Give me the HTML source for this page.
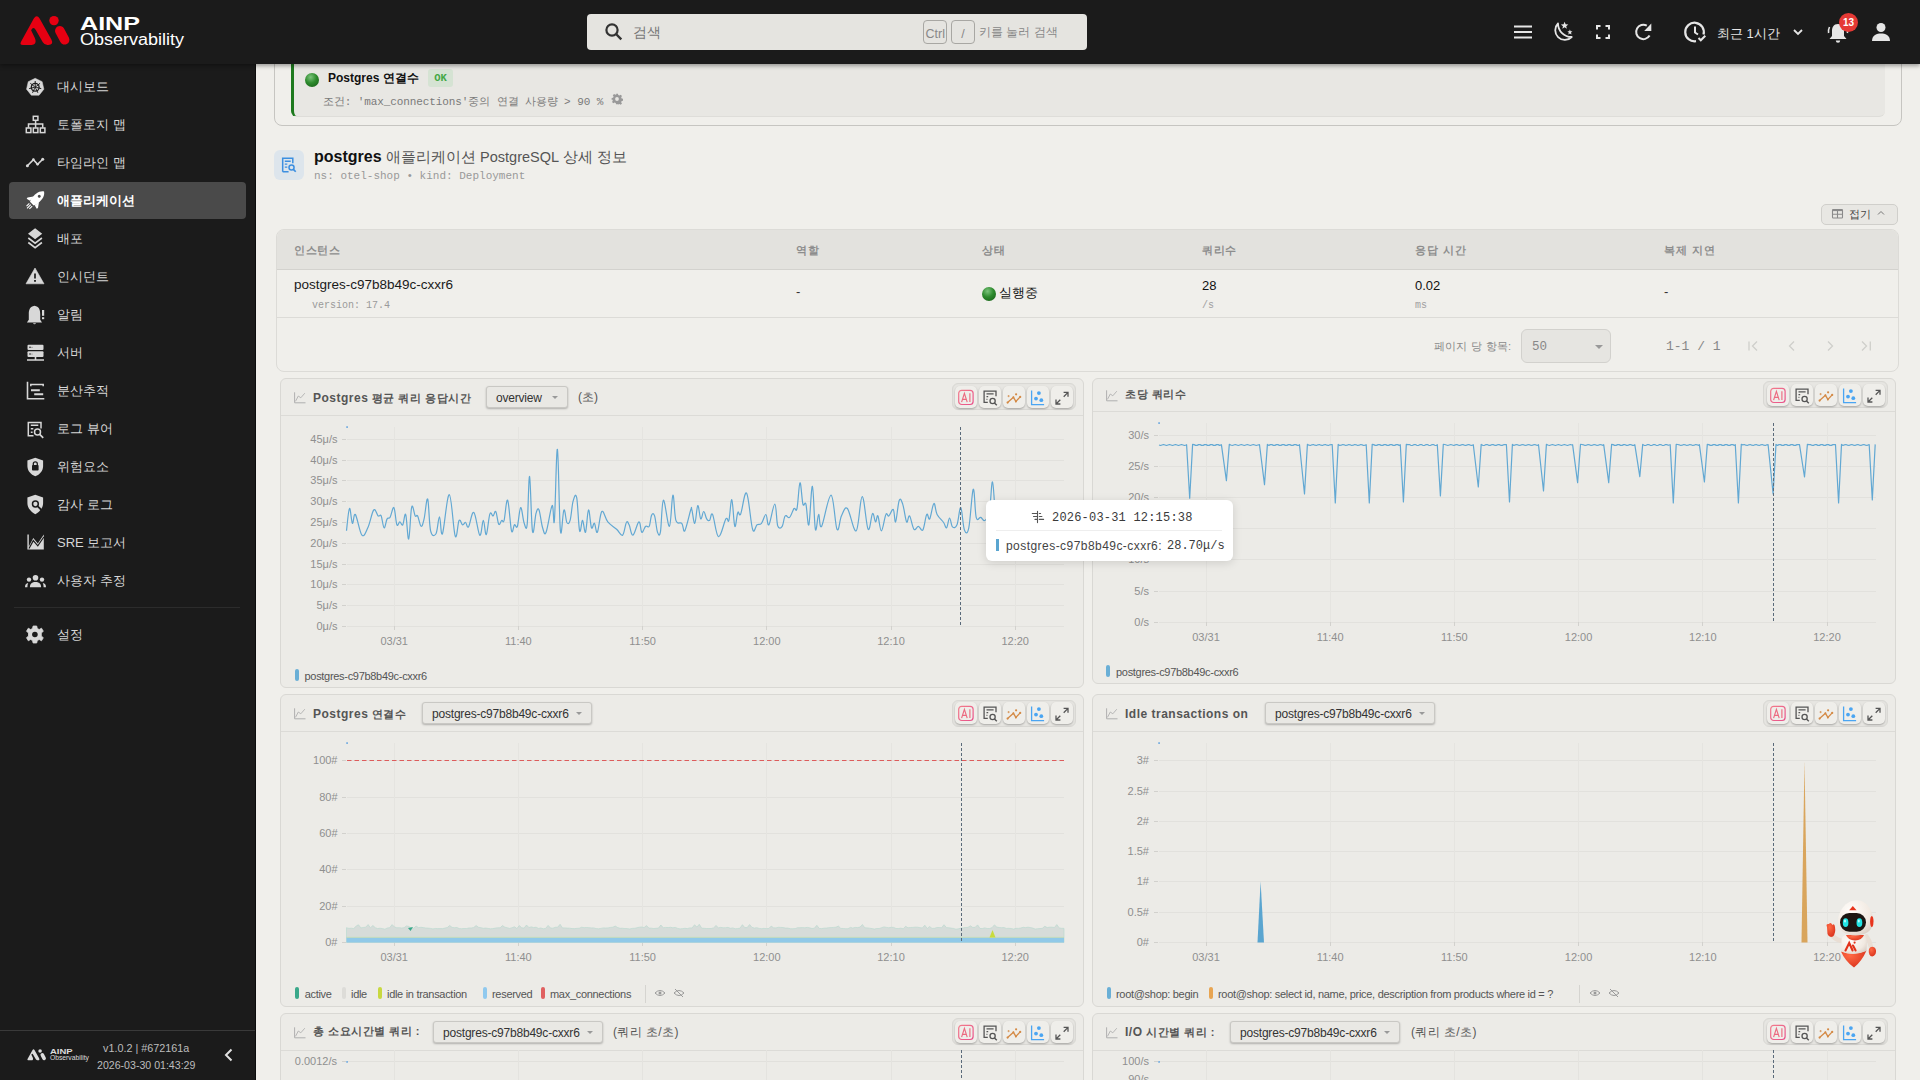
<!DOCTYPE html><html><head><meta charset="utf-8"><style>
*{box-sizing:border-box;margin:0;padding:0}
html,body{width:1920px;height:1080px;overflow:hidden}
body{font-family:"Liberation Sans",sans-serif;background:#f0efeb;position:relative;color:#222}
.abs{position:absolute}
.mono{font-family:"Liberation Mono",monospace}
#hdr{position:absolute;left:0;top:0;width:1920px;height:64px;background:#1b1b1b;z-index:5;box-shadow:0 2px 4px rgba(0,0,0,.35)}
#side{position:absolute;left:0;top:64px;width:256px;height:1016px;background:#1b1b1b;border-right:1px solid #0c0c0c;z-index:4}
.mi{position:absolute;left:9px;width:237px;height:37px;border-radius:4px;color:#d6d6d6;font-size:13px;line-height:37px}
.mi .ic{position:absolute;left:17px;top:9px;width:19px;height:19px}
.mi .tx{position:absolute;left:48px;top:0}
.mi.act{background:#4a4a4a;color:#fff;font-weight:bold}
.panel{position:absolute;background:#ecebe7;border:1px solid #d9d8d4;border-radius:6px;overflow:hidden}
.ph{position:absolute;left:0;top:0;right:0;border-bottom:1px solid #dcdbd7}
.ptitle i{font-style:normal;letter-spacing:.5px;font-size:12px}
.ptitle{position:absolute;font-size:11px;font-weight:bold;color:#555;letter-spacing:.5px;white-space:nowrap}
.sel{position:absolute;height:22px;border:1px solid #c9c8c4;border-radius:3px;background:#e9e8e4;box-shadow:0 1px 2px rgba(0,0,0,.25);font-size:12px;color:#333;line-height:23px;padding-left:9px;white-space:nowrap;letter-spacing:-.2px}
.sel:after{content:"";position:absolute;right:9.5px;top:9px;border-left:3px solid transparent;border-right:3px solid transparent;border-top:3px solid #999}
.tb{position:absolute;width:124.7px;height:27px;border:1px solid #d9d8d4;border-radius:6px;background:#e7e6e2;box-shadow:inset 0 0 1px rgba(0,0,0,.08)}
.btn{position:absolute;width:22px;height:22px;border-radius:5px;background:#efeeea;box-shadow:0 1px 2px rgba(0,0,0,.28)}
.btn svg{position:absolute;left:0;top:0}
.ylab{position:absolute;font-size:11px;line-height:15px;color:#8f8f8f;text-align:right;width:60px;white-space:nowrap}
.xlab{position:absolute;font-size:11px;line-height:15px;color:#8f8f8f;width:60px;text-align:center}
.leg{position:absolute;font-size:11px;line-height:15px;color:#555;white-space:nowrap;letter-spacing:-.3px}
.lb{display:inline-block;width:4px;height:12px;border-radius:1px;vertical-align:-2px;margin-right:5px}
</style></head><body><div id="hdr">
<svg class="abs" style="left:0;top:0" width="80" height="60" viewBox="0 0 80 60">
<path d="M23 45 Q19.3 45 21 41.8 L33.8 18.6 Q36.7 13.8 39.6 18.6 L51.4 39.6 Q54 45 48.2 45 L47.5 45 Q44.5 45 42.8 42.2 L35.9 30.2 Q33.4 25.8 31.1 30.2 L34.6 37.6 Q36.4 41.5 35 43.6 Q34 45 31.5 45 Z" fill="#e60012"/>
<circle cx="54" cy="20.6" r="4.7" fill="#e60012"/>
<path d="M59.8 30.8 L64.6 39.8" stroke="#e60012" stroke-width="9.6" stroke-linecap="round"/>
</svg>
<svg class="abs" style="left:79px;top:13px" width="110" height="40" viewBox="0 0 110 40">
<text x="1" y="16.8" font-family="Liberation Sans" font-weight="bold" font-size="18.5" fill="#fff" textLength="60" lengthAdjust="spacingAndGlyphs">AINP</text>
<text x="1" y="32" font-family="Liberation Sans" font-size="16" fill="#fff" textLength="104" lengthAdjust="spacingAndGlyphs">Observability</text>
</svg>
<div class="abs" style="left:587px;top:14px;width:500px;height:36px;background:#e5e4e0;border-radius:4px"></div>
<svg class="abs" style="left:604px;top:22px" width="20" height="20" viewBox="0 0 20 20"><circle cx="8" cy="8" r="5.6" fill="none" stroke="#333" stroke-width="2.2"/><path d="M12 12l5.3 5.3" stroke="#333" stroke-width="2.4"/></svg>
<div class="abs" style="left:633px;top:24px;font-size:13.5px;color:#777">검색</div>
<div class="abs" style="left:923px;top:20px;width:24px;height:24px;border:1px solid #a8a7a3;border-radius:4px;font-size:12.5px;color:#888;line-height:26px;padding-left:1.5px;overflow:hidden;white-space:nowrap">Ctrl</div>
<div class="abs" style="left:951px;top:20px;width:24px;height:24px;border:1px solid #a8a7a3;border-radius:4px;font-size:12.5px;color:#888;line-height:26px;text-align:center">/</div>
<div class="abs" style="left:979px;top:24px;font-size:12px;color:#888">키를 눌러 검색</div>
<svg class="abs" style="left:1513px;top:24px" width="20" height="16" viewBox="0 0 20 16"><path d="M1 2.5h18M1 8h18M1 13.5h18" stroke="#e6e6e6" stroke-width="2.2"/></svg>
<svg class="abs" style="left:0;top:0" width="1700" height="64" viewBox="0 0 1700 64"><path d="M1558 23.5 A9.6 9.6 0 1 0 1571.7 37 A13.5 13.5 0 0 1 1558 23.5 Z" fill="none" stroke="#e6e6e6" stroke-width="1.8" stroke-linejoin="round"/><path d="M1564.60,21.70 L1565.60,24.22 L1568.31,24.39 L1566.22,26.13 L1566.89,28.76 L1564.60,27.30 L1562.31,28.76 L1562.98,26.13 L1560.89,24.39 L1563.60,24.22Z" fill="#e6e6e6"/><path d="M1569.90,29.50 L1570.61,31.23 L1572.47,31.37 L1571.04,32.57 L1571.49,34.38 L1569.90,33.40 L1568.31,34.38 L1568.76,32.57 L1567.33,31.37 L1569.19,31.23Z" fill="#e6e6e6"/><path d="M1597 29.5 V26 H1600.5 M1605.5 26 H1609 V29.5 M1609 34.5 V38 H1605.5 M1600.5 38 H1597 V34.5" fill="none" stroke="#e6e6e6" stroke-width="2"/><path d="M1649.6 35.5 A7.2 7.2 0 1 1 1646.8 25.6" fill="none" stroke="#e6e6e6" stroke-width="2"/><path d="M1651.3 23.6 L1651.3 30.9 L1644.2 30.9 Z" fill="#e6e6e6"/></svg>
<svg class="abs" style="left:1683px;top:20px" width="26" height="24" viewBox="0 0 26 24"><path d="M20.5 14.5 A9.3 9.3 0 1 0 13 21.2" fill="none" stroke="#e6e6e6" stroke-width="2.2"/><path d="M12 6.5v6l3 2" fill="none" stroke="#e6e6e6" stroke-width="2"/><path d="M15.5 18l2.3 2.3 4.5-4.5" fill="none" stroke="#e6e6e6" stroke-width="2"/></svg>
<div class="abs" style="left:1717px;top:24.5px;font-size:13px;color:#e6e6e6">최근 1시간</div>
<svg class="abs" style="left:1792px;top:27px" width="12" height="10" viewBox="0 0 12 10"><path d="M2 3l4 4 4-4" fill="none" stroke="#e6e6e6" stroke-width="1.8"/></svg>
<svg class="abs" style="left:1826px;top:21px" width="24" height="24" viewBox="0 0 24 24"><path d="M12 3 C7.5 3 6 6.5 6 10 L6 15 L3.5 18 L20.5 18 L18 15 L18 10 C18 6.5 16.5 3 12 3Z" fill="#e6e6e6"/><path d="M9.8 19.5 a2.2 2.2 0 0 0 4.4 0z" fill="#e6e6e6"/><path d="M3.5 6 Q2 9 2.6 12 M20.5 6 Q22 9 21.4 12" fill="none" stroke="#e6e6e6" stroke-width="1.6"/></svg>
<div class="abs" style="left:1839px;top:13px;width:19px;height:19px;border-radius:50%;background:#e53935;color:#fff;font-size:10px;font-weight:bold;line-height:19px;text-align:center">13</div>
<svg class="abs" style="left:1871px;top:22px" width="20" height="20" viewBox="0 0 20 20"><circle cx="10" cy="5.5" r="4.5" fill="#e6e6e6"/><path d="M1 19 C1 13 6 11.5 10 11.5 C14 11.5 19 13 19 19 Z" fill="#e6e6e6"/></svg>
</div>
<div id="side">
<div class="mi" style="top:4px"><div class="tx">대시보드</div></div>
<div class="mi" style="top:42px"><div class="tx">토폴로지 맵</div></div>
<div class="mi" style="top:80px"><div class="tx">타임라인 맵</div></div>
<div class="mi act" style="top:118px"><div class="tx">애플리케이션</div></div>
<div class="mi" style="top:156px"><div class="tx">배포</div></div>
<div class="mi" style="top:194px"><div class="tx">인시던트</div></div>
<div class="mi" style="top:232px"><div class="tx">알림</div></div>
<div class="mi" style="top:270px"><div class="tx">서버</div></div>
<div class="mi" style="top:308px"><div class="tx">분산추적</div></div>
<div class="mi" style="top:346px"><div class="tx">로그 뷰어</div></div>
<div class="mi" style="top:384px"><div class="tx">위험요소</div></div>
<div class="mi" style="top:422px"><div class="tx">감사 로그</div></div>
<div class="mi" style="top:460px"><div class="tx">SRE 보고서</div></div>
<div class="mi" style="top:498px"><div class="tx">사용자 추정</div></div>
<div class="abs" style="left:14px;top:543px;width:226px;height:1px;background:#2c2c2c"></div>
<div class="mi" style="top:552px"><div class="tx">설정</div></div>
<svg class="abs" style="left:0;top:-64px;z-index:2" width="60" height="720" viewBox="0 0 60 720">
<path d="M35.20 78.30 L42.16 81.65 L43.88 89.18 L39.06 95.22 L31.34 95.22 L26.52 89.18 L28.24 81.65 Z" fill="#d8d8d8" stroke="#d8d8d8" stroke-width=".5" stroke-linejoin="round"/>
<circle cx="35.2" cy="87.2" r="3.9" fill="none" stroke="#1b1b1b" stroke-width="1.3"/>
<path d="M35.20 86.00 L35.20 81.00 M36.14 86.45 L40.05 83.33 M36.37 87.47 L41.24 88.58 M35.72 88.28 L37.89 92.79 M34.68 88.28 L32.51 92.79 M34.03 87.47 L29.16 88.58 M34.26 86.45 L30.35 83.33 " stroke="#1b1b1b" stroke-width="1"/>
<circle cx="35.2" cy="87.2" r="1.1" fill="#1b1b1b"/>
<rect x="33.3" y="116.3" width="4.6" height="4" fill="none" stroke="#d8d8d8" stroke-width="1.5"/>
<path d="M35.6 120.3v7.4M28.5 127.7v-3.7h14.2v3.7" fill="none" stroke="#d8d8d8" stroke-width="1.5"/>
<rect x="26.3" y="128" width="4.6" height="4.6" fill="none" stroke="#d8d8d8" stroke-width="1.5"/>
<rect x="33.3" y="128" width="4.6" height="4.6" fill="none" stroke="#d8d8d8" stroke-width="1.5"/>
<rect x="40.3" y="128" width="4.6" height="4.6" fill="none" stroke="#d8d8d8" stroke-width="1.5"/>
<path d="M27.4 165.7 L33.4 159.6 L37.6 164.3 L42.7 159.2" fill="none" stroke="#d8d8d8" stroke-width="1.6"/>
<circle cx="27.4" cy="165.7" r="1.5" fill="#d8d8d8"/><circle cx="33.4" cy="159.6" r="1.3" fill="#d8d8d8"/><circle cx="37.6" cy="164.3" r="1.3" fill="#d8d8d8"/><circle cx="42.7" cy="159.2" r="1.5" fill="#d8d8d8"/>
<g transform="rotate(45 37 198.5)">
<path d="M37 188.5 C41.3 191.5 41.6 197 40.9 203 L39.6 205.8 H34.4 L33.1 203 C32.4 197 32.7 191.5 37 188.5 Z" fill="#fff"/>
<path d="M33.2 199.5 L29.6 204.5 L29.9 206 L33.6 205 Z M40.8 199.5 L44.4 204.5 L44.1 206 L40.4 205 Z" fill="#fff"/>
<circle cx="37" cy="195.3" r="1.5" fill="#4a4a4a"/>
<path d="M35 207.3 V211.3 M37 207.3 V212.5 M39 207.3 V211.3" stroke="#fff" stroke-width="1.1"/>
</g>
<path d="M35.1 228.3 L42.2 233.8 L35.1 239.3 L28 233.8 Z" fill="#d8d8d8"/>
<path d="M28.3 238 L35.1 243.2 L41.9 238 M28.3 242.5 L35.1 247.7 L41.9 242.5" fill="none" stroke="#d8d8d8" stroke-width="1.6"/>
<path d="M35 268 L44 283.8 L26 283.8 Z" fill="#d8d8d8" stroke="#d8d8d8" stroke-width=".6" stroke-linejoin="round"/>
<path d="M35 273.5v5" stroke="#1b1b1b" stroke-width="1.7"/><rect x="34.1" y="280" width="1.8" height="1.8" fill="#1b1b1b"/>
<path d="M34.5 305.8 C30 306.5 28.8 310 28.8 314 L28.8 319.8 L26.9 322.5 L42 322.5 L40.2 319.8 L40.2 314 C40.2 310 39 306.5 34.5 305.8 Z" fill="#d8d8d8"/>
<path d="M33 323.3 a1.6 1.6 0 0 0 3 0 z" fill="#d8d8d8"/>
<rect x="42" y="310" width="2.2" height="5.8" fill="#d8d8d8"/><rect x="42" y="317.2" width="2.2" height="2" fill="#d8d8d8"/>
<rect x="27.5" y="344.8" width="16" height="5.3" rx="1" fill="#d8d8d8"/>
<rect x="27.5" y="351.3" width="16" height="5.6" rx="1" fill="#d8d8d8"/>
<path d="M35.5 357v2.5M27 360h17" stroke="#d8d8d8" stroke-width="1.6"/>
<circle cx="30" cy="347.3" r=".8" fill="#1b1b1b"/><circle cx="30" cy="354" r=".8" fill="#1b1b1b"/><circle cx="32" cy="347.3" r=".6" fill="#777"/><circle cx="32" cy="354" r=".6" fill="#777"/>
<path d="M27.5 381.7 V398.8 H44.3" fill="none" stroke="#d8d8d8" stroke-width="1.6"/>
<path d="M30.8 386.3 V384.5 H43.2 V386.3" fill="none" stroke="#d8d8d8" stroke-width="1.5"/>
<path d="M31 390.2 H39.8 M34.2 394.2 H43.2" stroke="#d8d8d8" stroke-width="2"/>
<path d="M41 428.5 V422.5 H28.3 V435.8 H33.5" fill="none" stroke="#d8d8d8" stroke-width="1.5"/>
<path d="M30.8 425.3h7.5M30.8 428.8h2.5M30.8 432.2h1.8" stroke="#d8d8d8" stroke-width="1.4"/>
<circle cx="37.5" cy="432" r="3" fill="none" stroke="#d8d8d8" stroke-width="1.5"/>
<path d="M39.7 434.3 L43.2 437.8" stroke="#d8d8d8" stroke-width="1.7"/>
<path d="M35.3 457.7 L43.1 460.6 V466 C43.1 471 39.8 474.6 35.3 476.2 C30.8 474.6 27.4 471 27.4 466 V460.6 Z" fill="#d8d8d8"/>
<rect x="32" y="465" width="6.6" height="5.6" rx=".8" fill="#1b1b1b"/>
<path d="M33.3 465.2 V463.8 a2 2 0 0 1 4 0 V465.2" fill="none" stroke="#1b1b1b" stroke-width="1.3"/>
<path d="M35.3 494.7 L43.1 497.6 V503 C43.1 508 39.8 511.8 35.3 514.2 C30.8 511.8 27.4 508 27.4 503 V497.6 Z" fill="#d8d8d8"/>
<circle cx="35.4" cy="504" r="2.9" fill="none" stroke="#1b1b1b" stroke-width="1.5"/>
<path d="M37.5 506.2 L41.5 510" stroke="#1b1b1b" stroke-width="1.8"/>
<path d="M27.4 549.5 V534.5 H28.8 V546.5 L33.3 538 L37.8 543.5 L43.8 534.5 V549.5 Z" fill="#d8d8d8"/>
<path d="M29 548.5 L33.3 540.6 L37.8 545.8 L43.8 537" fill="none" stroke="#1b1b1b" stroke-width="1.2"/>
<circle cx="35.5" cy="577.8" r="2.8" fill="#d8d8d8"/>
<circle cx="29" cy="579.6" r="2.2" fill="#d8d8d8"/><circle cx="42" cy="579.6" r="2.2" fill="#d8d8d8"/>
<path d="M29.9 587.2 C29.9 583.6 32.2 582 35.5 582 C38.8 582 41.1 583.6 41.1 587.2 Z" fill="#d8d8d8"/>
<path d="M25 587.2 C25 584.8 26 583.4 28.2 583 C27.6 584.2 27.4 585.6 27.4 587.2 Z" fill="#d8d8d8"/>
<path d="M46 587.2 C46 584.8 45 583.4 42.8 583 C43.4 584.2 43.6 585.6 43.6 587.2 Z" fill="#d8d8d8"/>
<g transform="translate(34.9 634.5)">
<path d="M-1.8 -8.5 H1.8 L2.4 -6 L4.3 -5 L6.6 -6.3 L8.4 -3.2 L6.4 -1.6 V1.6 L8.4 3.2 L6.6 6.3 L4.3 5 L2.4 6 L1.8 8.5 H-1.8 L-2.4 6 L-4.3 5 L-6.6 6.3 L-8.4 3.2 L-6.4 1.6 V-1.6 L-8.4 -3.2 L-6.6 -6.3 L-4.3 -5 L-2.4 -6 Z" fill="#d8d8d8" stroke="#d8d8d8" stroke-width=".8" stroke-linejoin="round"/>
<circle r="2.8" fill="#1b1b1b"/></g>
</svg>
<div class="abs" style="left:0;top:966px;width:255px;height:1px;background:#3a3a3a"></div>
<svg class="abs" style="left:0;top:-64px" width="100" height="1080" viewBox="0 0 100 1080">
<g transform="translate(19.57 1043.16) scale(0.38)">
<path d="M23 45 Q19.3 45 21 41.8 L33.8 18.6 Q36.7 13.8 39.6 18.6 L51.4 39.6 Q54 45 48.2 45 L47.5 45 Q44.5 45 42.8 42.2 L35.9 30.2 Q33.4 25.8 31.1 30.2 L34.6 37.6 Q36.4 41.5 35 43.6 Q34 45 31.5 45 Z" fill="#dcdcdc"/>
<circle cx="54" cy="20.6" r="4.7" fill="#dcdcdc"/>
<path d="M59.8 30.8 L64.6 39.8" stroke="#dcdcdc" stroke-width="9.6" stroke-linecap="round"/>
</g>
<text x="50" y="1054" font-family="Liberation Sans" font-weight="bold" font-size="7.2" fill="#dcdcdc" textLength="22.7" lengthAdjust="spacingAndGlyphs">AINP</text>
<text x="50" y="1060.3" font-family="Liberation Sans" font-size="6.6" fill="#dcdcdc" textLength="39" lengthAdjust="spacingAndGlyphs">Observability</text></svg>
<div class="abs" style="left:103px;top:977.5px;font-size:10.8px;color:#bdbdbd;white-space:nowrap">v1.0.2 | #672161a</div>
<div class="abs" style="left:97px;top:994.5px;font-size:10.6px;color:#bdbdbd;white-space:nowrap">2026-03-30 01:43:29</div>
<svg class="abs" style="left:222px;top:984px" width="14" height="14" viewBox="0 0 14 14"><path d="M9.5 1.5L4 7l5.5 5.5" fill="none" stroke="#e0e0e0" stroke-width="2"/></svg>
</div>
<div class="abs" style="left:274px;top:40px;width:1628px;height:86px;border:1px solid #c6c5c1;border-radius:8px;background:#f0efeb"></div>
<div class="abs" style="left:291px;top:40px;width:1594px;height:77px;background:#e8e7e3;border-left:3px solid #1e7a1e;border-bottom:1px solid #deddd9;border-radius:0 0 6px 6px"></div>
<div class="abs" style="left:305px;top:73px;width:14px;height:14px;border-radius:50%;background:radial-gradient(circle at 40% 30%,#7cc47c 0,#2e8b2e 45%,#145a14 100%)"></div>
<div class="abs" style="left:328px;top:69.5px;font-size:12px;font-weight:bold;color:#111;white-space:nowrap">Postgres 연결수</div>
<div class="abs mono" style="left:428px;top:69px;width:25px;height:17.5px;background:#d5e3d3;border-radius:3px;color:#43a843;font-size:10.5px;font-weight:bold;line-height:19px;text-align:center">OK</div>
<div class="abs mono" style="left:323px;top:93.5px;font-size:11px;color:#7a7a7a;white-space:nowrap;letter-spacing:-.1px">조건: 'max_connections'중의 연결 사용량 &gt; 90 %</div>
<svg class="abs" style="left:611px;top:93px" width="12" height="12" viewBox="0 0 19 19"><path d="M8 1h3l.5 2.3 1.8.8 2-1.3 2.1 2.1-1.3 2 .8 1.8 2.3.5v3l-2.3.5-.8 1.8 1.3 2-2.1 2.1-2-1.3-1.8.8L11 18H8l-.5-2.3-1.8-.8-2 1.3-2.1-2.1 1.3-2-.8-1.8L1 11V8l2.3-.5.8-1.8-1.3-2 2.1-2.1 2 1.3 1.8-.8Z" fill="#999"/><circle cx="9.5" cy="9.5" r="3" fill="#e7e6e2"/></svg>
<div class="abs" style="left:274px;top:150px;width:30px;height:30px;border-radius:6px;background:#dde5ec"></div>
<svg class="abs" style="left:281px;top:157px" width="16" height="16" viewBox="0 0 19 19"><path d="M2 17.5V1.5h12V7.5M2 17.5h7" fill="none" stroke="#3d8fe0" stroke-width="1.8"/><path d="M4.5 5h7M4.5 8.5h3M4.5 12h3" stroke="#3d8fe0" stroke-width="1.6"/><circle cx="12.5" cy="12.5" r="3" fill="none" stroke="#3d8fe0" stroke-width="1.8"/><path d="M14.7 14.7L17.5 17.5" stroke="#3d8fe0" stroke-width="2"/></svg>
<div class="abs" style="left:314px;top:148px;font-size:16px;white-space:nowrap;color:#555"><b style="color:#111">postgres</b> <span style="font-size:14.5px">애플리케이션 PostgreSQL 상세 정보</span></div>
<div class="abs mono" style="left:314px;top:170px;font-size:11px;color:#999;white-space:nowrap">ns: otel-shop • kind: Deployment</div>
<div class="abs" style="left:1821px;top:203.5px;width:76.5px;height:21.2px;border:1px solid #d0cfcb;border-radius:5px;background:#e8e7e3"></div>
<svg class="abs" style="left:1831px;top:208px" width="13" height="12" viewBox="0 0 13 12"><rect x="1.5" y="1.6" width="10" height="8.4" rx=".8" fill="none" stroke="#8a8a8a" stroke-width="1.1"/><path d="M1.5 2.3h10" stroke="#8a8a8a" stroke-width="1.6"/><path d="M1.5 6.3h10M6.5 2v8" stroke="#8a8a8a" stroke-width="1.1"/></svg>
<div class="abs" style="left:1849px;top:207px;font-size:11px;color:#444">접기</div>
<svg class="abs" style="left:1877px;top:210px" width="8" height="6" viewBox="0 0 8 6"><path d="M1 4.5L4 1.5 7 4.5" fill="none" stroke="#777" stroke-width="1"/></svg>
<div class="abs" style="left:276px;top:229px;width:1623px;height:143px;border:1px solid #dcdbd7;border-radius:8px;background:#f0efeb;overflow:hidden">
<div class="abs" style="left:0;top:0;width:100%;height:40px;background:#e3e2de;border-bottom:1px solid #d3d2ce"></div>
<div class="abs" style="left:0;top:88px;width:100%;height:1px;background:#dedddа"></div>
</div>
<div class="abs" style="left:277px;top:317px;width:1621px;height:1px;background:#dcdbd7"></div>
<div class="abs" style="left:294px;top:243.5px;font-size:10.5px;font-weight:bold;color:#8d8d8d;letter-spacing:.5px;word-spacing:2px;white-space:nowrap">인스턴스</div>
<div class="abs" style="left:796px;top:243.5px;font-size:10.5px;font-weight:bold;color:#8d8d8d;letter-spacing:.5px;word-spacing:2px;white-space:nowrap">역할</div>
<div class="abs" style="left:982px;top:243.5px;font-size:10.5px;font-weight:bold;color:#8d8d8d;letter-spacing:.5px;word-spacing:2px;white-space:nowrap">상태</div>
<div class="abs" style="left:1202px;top:243.5px;font-size:10.5px;font-weight:bold;color:#8d8d8d;letter-spacing:.5px;word-spacing:2px;white-space:nowrap">쿼리수</div>
<div class="abs" style="left:1415px;top:243.5px;font-size:10.5px;font-weight:bold;color:#8d8d8d;letter-spacing:.5px;word-spacing:2px;white-space:nowrap">응답 시간</div>
<div class="abs" style="left:1664px;top:243.5px;font-size:10.5px;font-weight:bold;color:#8d8d8d;letter-spacing:.5px;word-spacing:2px;white-space:nowrap">복제 지연</div>
<div class="abs" style="left:294px;top:277px;font-size:13.5px;color:#1a1a1a;white-space:nowrap">postgres-c97b8b49c-cxxr6</div>
<div class="abs mono" style="left:312px;top:299.5px;font-size:10px;color:#9a9a9a;white-space:nowrap">version: 17.4</div>
<div class="abs" style="left:796px;top:284px;font-size:13px;color:#333">-</div>
<div class="abs" style="left:982px;top:287px;width:14px;height:14px;border-radius:50%;background:radial-gradient(circle at 40% 30%,#7cc47c 0,#2e8b2e 45%,#145a14 100%)"></div>
<div class="abs" style="left:999px;top:284px;font-size:13px;color:#111">실행중</div>
<div class="abs" style="left:1202px;top:277.5px;font-size:13px;color:#111">28</div>
<div class="abs mono" style="left:1202px;top:300px;font-size:10px;color:#a0a0a0">/s</div>
<div class="abs" style="left:1415px;top:277.5px;font-size:13px;color:#111">0.02</div>
<div class="abs mono" style="left:1415px;top:300px;font-size:10px;color:#a0a0a0">ms</div>
<div class="abs" style="left:1664px;top:284px;font-size:13px;color:#333">-</div>
<div class="abs" style="left:1434px;top:339px;font-size:11px;color:#8a8a8a;letter-spacing:0px;word-spacing:1px;white-space:nowrap">페이지 당 항목:</div>
<div class="abs" style="left:1521px;top:329px;width:90px;height:34px;border:1px solid #d2d1cd;border-radius:6px;background:#e6e5e1"></div>
<div class="abs mono" style="left:1532px;top:339.5px;font-size:12.5px;color:#888">50</div>
<div class="abs" style="left:1595px;top:345px;border-left:4px solid transparent;border-right:4px solid transparent;border-top:4px solid #999"></div>
<div class="abs mono" style="left:1666px;top:338.5px;font-size:13px;color:#888;white-space:nowrap">1-1 / 1</div>
<svg class="abs" style="left:1746px;top:339px" width="130" height="14" viewBox="0 0 130 14"><path d="M3 2.5v9M11 2.5L6.5 7l4.5 4.5" fill="none" stroke="#cfcfcb" stroke-width="1.3"/><path d="M48 2.5L43.5 7l4.5 4.5" fill="none" stroke="#cfcfcb" stroke-width="1.3"/><path d="M82 2.5l4.5 4.5-4.5 4.5" fill="none" stroke="#cfcfcb" stroke-width="1.3"/><path d="M116 2.5l4.5 4.5-4.5 4.5M124.3 2.5v9" fill="none" stroke="#cfcfcb" stroke-width="1.3"/></svg>
<div class="panel" style="left:280px;top:378px;width:804px;height:310px"><div class="ph" style="height:37px"></div></div>
<div class="abs" style="left:294px;top:389.5px"><svg width="12" height="12" viewBox="0 0 12 12"><path d="M.6 .3V10.8H11.5" fill="none" stroke="#b0b0b0" stroke-width="1"/><path d="M1.5 9.3L4.3 4 6.8 5.8 10.8 1.2" fill="none" stroke="#b0b0b0" stroke-width=".9"/></svg></div>
<div class="ptitle" style="left:313px;top:390.5px"><i>Postgres</i> 평균 쿼리 응답시간</div>
<div class="sel" style="left:486px;top:386px;width:82px">overview</div>
<div class="abs" style="left:578px;top:389px;font-size:12px;color:#555">(초)</div>
<div class="tb" style="left:951.6px;top:383.1px"></div><div class="btn" style="left:955.0px;top:385.9px"><svg width="22" height="22" viewBox="0 0 22 22"><defs><linearGradient id="aig" x1="0" y1="0" x2="1" y2="1"><stop offset="0" stop-color="#f27c8c"/><stop offset="1" stop-color="#e8508a"/></linearGradient></defs><rect x="3.7" y="4.3" width="14.4" height="14.2" rx="3" fill="none" stroke="url(#aig)" stroke-width="1.2"/><path d="M6.6 16.1 L9.4 7.3 L12.2 16.1 M7.5 13.3 H11.3 M14.9 7.3 V16.1" fill="none" stroke="#ec6a80" stroke-width="1.15"/></svg></div><div class="btn" style="left:979.0px;top:385.9px"><svg width="22" height="22" viewBox="0 0 22 22"><path d="M8.8 16.4 H5.1 V5.1 H17 V10.3" fill="none" stroke="#555" stroke-width="1.3"/><path d="M7.5 7.8 H14.6 M7.5 10.6 H9.2 M7.5 13.3 H8.4" stroke="#555" stroke-width="1.2"/><circle cx="13.6" cy="15" r="2.6" fill="none" stroke="#555" stroke-width="1.3"/><path d="M15.5 16.9 L17.8 19.2" stroke="#555" stroke-width="1.4"/></svg></div><div class="btn" style="left:1003.0px;top:385.9px"><svg width="22" height="22" viewBox="0 0 22 22"><path d="M4.6 16.6 L10.4 11.3 L12.9 15.4 L17.2 10.9" fill="none" stroke="#d48a46" stroke-width="1.3"/><circle cx="4.6" cy="16.6" r="1.1" fill="#d48a46"/><circle cx="10.4" cy="11.3" r="1" fill="#d48a46"/><circle cx="12.9" cy="15.4" r="1" fill="#d48a46"/><circle cx="17.2" cy="10.9" r="1.1" fill="#d48a46"/><path d="M5.6 9 V11.2 M4.5 10.1 H6.7" stroke="#d48a46" stroke-width=".7"/><circle cx="13.1" cy="8.3" r="1.1" fill="#d48a46"/></svg></div><div class="btn" style="left:1027.0px;top:385.9px"><svg width="22" height="22" viewBox="0 0 22 22"><path d="M4.6 4.6 V18.7 H17.1" fill="none" stroke="#4aa5f2" stroke-width="1.3"/><circle cx="11.9" cy="7.1" r="1.9" fill="#4aa5f2"/><circle cx="9" cy="12.6" r="1.9" fill="#4aa5f2"/><circle cx="14.3" cy="14.2" r="1.9" fill="#4aa5f2"/></svg></div><div class="btn" style="left:1051.0px;top:385.9px"><svg width="22" height="22" viewBox="0 0 22 22"><path d="M12.6 6.4 H17 V10.8 M17 6.4 L12.7 10.7 M5 13.6 V18 H9.4 M5 18 L9.3 13.7" fill="none" stroke="#555" stroke-width="1.3"/></svg></div>
<div class="ylab" style="left:277.5px;top:618.9px">0μ/s</div>
<div class="ylab" style="left:277.5px;top:598.1px">5μ/s</div>
<div class="ylab" style="left:277.5px;top:577.3px">10μ/s</div>
<div class="ylab" style="left:277.5px;top:556.5px">15μ/s</div>
<div class="ylab" style="left:277.5px;top:535.7px">20μ/s</div>
<div class="ylab" style="left:277.5px;top:514.9px">25μ/s</div>
<div class="ylab" style="left:277.5px;top:494.1px">30μ/s</div>
<div class="ylab" style="left:277.5px;top:473.3px">35μ/s</div>
<div class="ylab" style="left:277.5px;top:452.5px">40μ/s</div>
<div class="ylab" style="left:277.5px;top:431.7px">45μ/s</div>
<div class="xlab" style="left:364.2px;top:633.5px">03/31</div>
<div class="xlab" style="left:488.4px;top:633.5px">11:40</div>
<div class="xlab" style="left:612.6px;top:633.5px">11:50</div>
<div class="xlab" style="left:736.8px;top:633.5px">12:00</div>
<div class="xlab" style="left:861.0px;top:633.5px">12:10</div>
<div class="xlab" style="left:985.2px;top:633.5px">12:20</div>
<svg class="abs" style="left:0;top:0;overflow:visible" width="1920" height="1080"><line x1="347" y1="626.5" x2="1064" y2="626.5" stroke="#e2e1dd" stroke-width="1"/><line x1="342" y1="626.5" x2="346" y2="626.5" stroke="#d2d1cd" stroke-width="1"/><line x1="347" y1="605.5" x2="1064" y2="605.5" stroke="#e2e1dd" stroke-width="1"/><line x1="342" y1="605.5" x2="346" y2="605.5" stroke="#d2d1cd" stroke-width="1"/><line x1="347" y1="584.5" x2="1064" y2="584.5" stroke="#e2e1dd" stroke-width="1"/><line x1="342" y1="584.5" x2="346" y2="584.5" stroke="#d2d1cd" stroke-width="1"/><line x1="347" y1="564.5" x2="1064" y2="564.5" stroke="#e2e1dd" stroke-width="1"/><line x1="342" y1="564.5" x2="346" y2="564.5" stroke="#d2d1cd" stroke-width="1"/><line x1="347" y1="543.5" x2="1064" y2="543.5" stroke="#e2e1dd" stroke-width="1"/><line x1="342" y1="543.5" x2="346" y2="543.5" stroke="#d2d1cd" stroke-width="1"/><line x1="347" y1="522.5" x2="1064" y2="522.5" stroke="#e2e1dd" stroke-width="1"/><line x1="342" y1="522.5" x2="346" y2="522.5" stroke="#d2d1cd" stroke-width="1"/><line x1="347" y1="501.5" x2="1064" y2="501.5" stroke="#e2e1dd" stroke-width="1"/><line x1="342" y1="501.5" x2="346" y2="501.5" stroke="#d2d1cd" stroke-width="1"/><line x1="347" y1="480.5" x2="1064" y2="480.5" stroke="#e2e1dd" stroke-width="1"/><line x1="342" y1="480.5" x2="346" y2="480.5" stroke="#d2d1cd" stroke-width="1"/><line x1="347" y1="460.5" x2="1064" y2="460.5" stroke="#e2e1dd" stroke-width="1"/><line x1="342" y1="460.5" x2="346" y2="460.5" stroke="#d2d1cd" stroke-width="1"/><line x1="347" y1="439.5" x2="1064" y2="439.5" stroke="#e2e1dd" stroke-width="1"/><line x1="342" y1="439.5" x2="346" y2="439.5" stroke="#d2d1cd" stroke-width="1"/><line x1="394.5" y1="427" x2="394.5" y2="626" stroke="#e5e4e0" stroke-width="1"/><line x1="394.5" y1="626" x2="394.5" y2="630" stroke="#d2d1cd" stroke-width="1"/><line x1="518.5" y1="427" x2="518.5" y2="626" stroke="#e5e4e0" stroke-width="1"/><line x1="518.5" y1="626" x2="518.5" y2="630" stroke="#d2d1cd" stroke-width="1"/><line x1="642.5" y1="427" x2="642.5" y2="626" stroke="#e5e4e0" stroke-width="1"/><line x1="642.5" y1="626" x2="642.5" y2="630" stroke="#d2d1cd" stroke-width="1"/><line x1="766.5" y1="427" x2="766.5" y2="626" stroke="#e5e4e0" stroke-width="1"/><line x1="766.5" y1="626" x2="766.5" y2="630" stroke="#d2d1cd" stroke-width="1"/><line x1="891.5" y1="427" x2="891.5" y2="626" stroke="#e5e4e0" stroke-width="1"/><line x1="891.5" y1="626" x2="891.5" y2="630" stroke="#d2d1cd" stroke-width="1"/><line x1="1015.5" y1="427" x2="1015.5" y2="626" stroke="#e5e4e0" stroke-width="1"/><line x1="1015.5" y1="626" x2="1015.5" y2="630" stroke="#d2d1cd" stroke-width="1"/><path d="M346.5,530.8 C347.0,526.8 348.4,509.9 349.5,508.5 C350.5,507.2 351.4,522.3 352.4,523.3 C353.5,524.4 353.7,512.3 355.4,514.5 C357.1,516.6 359.7,532.8 361.9,535.2 C364.1,537.6 365.7,532.3 367.8,527.8 C370.0,523.3 371.9,512.2 373.7,510.0 C375.6,507.9 376.9,514.9 378.2,515.9 C379.5,517.0 380.1,513.8 381.2,515.9 C382.2,518.1 383.0,527.3 384.1,527.8 C385.2,528.3 386.0,520.8 387.1,518.9 C388.1,517.0 388.8,519.4 390.0,517.4 C391.3,515.4 392.7,506.3 393.9,507.6 C395.1,509.0 395.8,522.3 396.9,524.8 C397.9,527.4 398.7,521.9 399.8,521.9 C400.9,521.9 401.7,526.2 402.8,524.8 C403.8,523.5 404.7,511.9 405.7,514.5 C406.8,517.0 407.6,540.4 408.7,539.0 C409.8,537.7 410.5,511.2 411.7,507.1 C412.8,502.9 414.2,514.3 415.2,515.9 C416.3,517.5 416.5,514.1 417.6,515.9 C418.7,517.8 420.0,525.8 421.1,526.3 C422.3,526.8 422.9,523.8 424.1,518.9 C425.3,514.0 426.5,496.9 427.7,499.1 C428.8,501.2 429.1,524.5 430.6,530.8 C432.1,537.0 434.4,536.2 436.0,533.7 C437.6,531.2 438.3,516.8 439.5,516.8 C440.7,516.8 440.7,537.7 442.5,533.7 C444.2,529.7 447.0,494.2 449.3,494.6 C451.6,495.0 453.4,531.4 455.2,536.1 C457.0,540.7 457.7,522.4 459.1,520.4 C460.4,518.4 461.4,524.5 462.6,524.8 C463.8,525.2 464.5,522.1 465.6,522.5 C466.6,522.8 467.0,528.7 468.5,526.9 C470.0,525.1 471.8,510.9 473.9,512.4 C475.9,513.9 478.1,533.8 479.8,535.2 C481.5,536.6 482.2,520.5 483.3,520.4 C484.5,520.3 485.1,535.8 486.3,534.6 C487.5,533.4 488.6,517.2 489.9,513.9 C491.1,510.5 492.1,516.4 493.1,515.9 C494.2,515.5 494.8,510.0 495.8,511.5 C496.8,513.0 497.7,522.6 498.7,524.2 C499.8,525.8 500.8,521.1 501.7,520.4 C502.7,519.7 503.0,524.0 504.1,520.4 C505.1,516.8 506.3,498.4 507.6,500.2 C509.0,502.1 510.3,526.3 511.5,530.8 C512.7,535.2 513.4,525.6 514.4,524.8 C515.5,524.0 516.3,529.4 517.4,526.3 C518.5,523.2 519.4,508.2 520.7,507.6 C521.9,507.1 523.0,520.4 524.2,523.3 C525.4,526.3 526.2,532.7 527.2,524.2 C528.1,515.8 528.6,475.3 529.6,476.5 C530.5,477.8 531.3,524.8 532.5,531.3 C533.7,537.9 534.9,516.8 536.1,513.0 C537.2,509.1 537.9,507.4 539.0,510.0 C540.2,512.7 541.3,523.8 542.6,527.8 C543.9,531.8 544.4,536.2 546.1,532.2 C547.8,528.2 550.6,507.7 552.1,505.6 C553.6,503.4 553.5,530.5 554.4,520.4 C555.4,510.3 556.3,447.4 557.4,449.3 C558.5,451.2 559.2,519.8 560.4,530.8 C561.5,541.7 562.7,511.5 563.9,510.0 C565.1,508.5 565.8,520.6 566.9,522.5 C568.0,524.3 569.0,524.2 570.1,520.4 C571.3,516.5 571.9,505.2 573.1,501.1 C574.3,497.0 575.5,492.2 576.7,497.6 C577.8,502.9 578.5,526.6 579.6,530.8 C580.7,534.9 581.5,520.1 582.6,520.4 C583.6,520.7 584.5,534.1 585.5,532.2 C586.6,530.4 587.4,510.8 588.5,510.0 C589.6,509.2 590.4,525.4 591.5,527.8 C592.5,530.2 593.4,522.5 594.4,523.3 C595.5,524.1 596.1,534.4 597.4,532.2 C598.7,530.1 600.0,513.4 601.8,511.5 C603.7,509.6 605.1,518.7 607.8,521.9 C610.4,525.1 614.0,526.9 616.6,529.3 C619.3,531.7 620.8,536.4 622.6,535.2 C624.3,534.0 625.2,524.3 626.4,522.5 C627.6,520.6 627.9,522.5 629.1,524.8 C630.3,527.1 631.2,535.7 632.9,535.2 C634.7,534.7 637.3,522.4 638.9,521.9 C640.5,521.3 640.6,531.4 641.8,532.2 C643.0,533.0 644.3,527.4 645.7,526.3 C647.0,525.2 648.2,528.3 649.2,526.3 C650.3,524.3 650.6,516.9 651.6,515.1 C652.6,513.2 653.5,512.8 654.6,515.9 C655.6,519.0 656.5,529.4 657.5,532.2 C658.6,535.1 659.4,537.4 660.5,531.6 C661.5,525.9 661.8,501.2 663.4,500.2 C665.0,499.3 667.7,527.2 669.4,526.3 C671.1,525.4 671.7,496.3 672.9,495.2 C674.1,494.1 674.3,515.3 675.9,520.4 C677.5,525.5 680.2,521.5 681.8,523.3 C683.4,525.2 683.2,533.2 684.8,530.8 C686.4,528.4 689.4,513.9 690.7,510.0 C692.0,506.2 691.1,507.0 691.8,509.4 C692.6,511.8 693.7,524.0 694.8,523.3 C695.9,522.7 696.7,506.4 697.8,505.6 C698.8,504.8 699.7,517.8 700.7,518.9 C701.8,520.0 702.6,511.5 703.7,511.5 C704.8,511.5 705.6,517.3 706.7,518.9 C707.7,520.5 708.6,521.2 709.6,520.4 C710.7,519.6 711.0,511.5 712.6,514.5 C714.2,517.4 716.1,535.9 718.5,536.7 C720.9,537.5 724.0,521.8 725.9,518.9 C727.8,516.0 727.8,523.9 728.9,520.4 C729.9,516.9 730.8,498.6 731.8,499.7 C732.9,500.7 733.7,524.0 734.8,526.3 C735.9,528.6 736.7,514.6 737.8,512.4 C738.8,510.1 739.1,517.3 740.7,513.9 C742.3,510.4 744.5,490.4 746.6,493.1 C748.8,495.9 750.7,523.6 752.6,529.3 C754.4,535.0 755.4,525.9 757.0,524.8 C758.6,523.8 759.9,525.2 761.5,523.3 C763.1,521.5 764.6,514.2 765.9,514.5 C767.2,514.7 767.3,526.7 768.9,524.8 C770.5,523.0 773.2,503.9 774.8,504.1 C776.4,504.3 776.4,521.7 777.7,525.7 C779.1,529.7 780.9,528.1 782.2,526.3 C783.5,524.5 783.8,517.5 785.2,515.9 C786.5,514.3 788.0,518.8 789.6,517.4 C791.2,516.1 792.7,510.1 794.0,508.5 C795.4,506.9 795.9,513.2 797.0,508.5 C798.1,503.9 798.9,483.6 800.0,482.8 C801.0,482.0 801.9,500.3 802.9,504.1 C804.0,507.9 804.8,500.4 805.9,504.1 C807.0,507.8 807.7,528.0 808.9,524.8 C810.0,521.6 811.2,485.5 812.4,486.3 C813.6,487.1 814.2,524.2 815.4,529.3 C816.5,534.3 817.5,515.0 818.6,514.5 C819.7,513.9 819.3,529.8 821.6,526.3 C823.8,522.8 828.3,494.7 831.1,495.2 C833.8,495.7 835.1,525.5 837.0,529.3 C838.9,533.0 839.6,519.7 841.4,515.9 C843.3,512.2 844.7,505.9 847.4,508.5 C850.0,511.2 853.6,532.9 856.2,530.8 C858.9,528.6 860.0,497.0 862.2,496.7 C864.3,496.4 866.2,526.2 868.1,529.3 C870.0,532.3 871.2,514.9 872.5,513.6 C873.9,512.2 874.5,521.4 875.5,521.9 C876.5,522.3 876.8,514.3 877.9,515.9 C878.9,517.5 880.0,531.0 881.4,530.8 C882.9,530.5 884.5,517.1 885.9,514.5 C887.2,511.8 887.5,516.8 888.8,515.9 C890.2,515.0 892.0,508.4 893.3,509.4 C894.5,510.5 894.6,523.5 895.6,521.9 C896.7,520.3 897.9,503.7 899.2,500.5 C900.5,497.3 901.4,500.3 902.7,504.1 C904.1,507.9 905.4,519.7 906.6,521.9 C907.8,524.0 908.2,514.6 909.6,515.9 C910.9,517.3 912.4,527.4 914.0,529.3 C915.6,531.1 916.8,526.2 918.4,526.3 C920.0,526.4 921.4,532.0 922.9,529.9 C924.4,527.7 925.5,516.4 926.7,514.5 C928.0,512.5 928.4,520.9 929.7,518.9 C931.0,516.9 932.5,504.3 933.9,503.5 C935.2,502.7 935.3,511.0 937.1,514.5 C938.9,517.9 941.9,520.1 943.6,522.5 C945.3,524.9 945.5,528.6 946.6,527.8 C947.7,527.0 948.5,518.2 949.5,518.0 C950.6,517.9 951.2,525.7 952.5,526.9 C953.8,528.1 955.5,528.3 957.0,524.8 C958.4,521.4 959.5,506.7 960.8,507.6 C962.1,508.6 962.9,526.2 964.4,529.9 C965.8,533.5 967.2,535.1 968.8,527.8 C970.4,520.5 971.9,491.1 973.2,489.3 C974.6,487.4 974.9,512.4 976.2,517.4 C977.5,522.5 979.1,516.9 980.7,517.4 C982.3,518.0 983.5,521.7 985.1,520.4 C986.7,519.1 988.2,516.9 989.5,510.0 C990.9,503.1 991.4,481.3 992.5,481.9 C993.6,482.4 994.1,504.7 995.5,513.0 C996.8,521.2 998.0,525.7 999.9,527.8 C1001.8,529.9 1003.7,524.3 1005.8,524.8 C1008.0,525.4 1009.6,531.8 1011.8,530.8 C1013.9,529.7 1015.5,519.4 1017.7,518.9 C1019.8,518.4 1021.5,527.0 1023.6,527.8 C1025.7,528.6 1027.4,522.8 1029.5,523.3 C1031.7,523.9 1032.8,531.6 1035.5,530.8 C1038.1,530.0 1041.1,520.0 1044.3,518.9 C1047.5,517.8 1049.8,524.0 1053.2,524.8 C1056.7,525.6 1061.7,523.6 1063.6,523.3" fill="none" stroke="#62a8d3" stroke-width="1.2"/><line x1="960.5" y1="427" x2="960.5" y2="626" stroke="#5a6a7a" stroke-width="1" stroke-dasharray="3,2"/><rect x="346.2" y="426.2" width="1.8" height="1.8" fill="#7fb2e0"/></svg>
<div class="abs" style="left:294.8px;top:669px;width:4px;height:12px;border-radius:2px;background:#6aafd6"></div>
<div class="leg" style="left:304.5px;top:668.5px;width:143px">postgres-c97b8b49c-cxxr6</div>
<div class="panel" style="left:1092px;top:378px;width:804px;height:306px"><div class="ph" style="height:33px"></div></div>
<div class="abs" style="left:1106px;top:388px"><svg width="12" height="12" viewBox="0 0 12 12"><path d="M.6 .3V10.8H11.5" fill="none" stroke="#b0b0b0" stroke-width="1"/><path d="M1.5 9.3L4.3 4 6.8 5.8 10.8 1.2" fill="none" stroke="#b0b0b0" stroke-width=".9"/></svg></div>
<div class="ptitle" style="left:1125px;top:387px">초당 쿼리수</div>
<div class="tb" style="left:1763.4px;top:381.2px"></div><div class="btn" style="left:1766.8px;top:384.0px"><svg width="22" height="22" viewBox="0 0 22 22"><defs><linearGradient id="aig" x1="0" y1="0" x2="1" y2="1"><stop offset="0" stop-color="#f27c8c"/><stop offset="1" stop-color="#e8508a"/></linearGradient></defs><rect x="3.7" y="4.3" width="14.4" height="14.2" rx="3" fill="none" stroke="url(#aig)" stroke-width="1.2"/><path d="M6.6 16.1 L9.4 7.3 L12.2 16.1 M7.5 13.3 H11.3 M14.9 7.3 V16.1" fill="none" stroke="#ec6a80" stroke-width="1.15"/></svg></div><div class="btn" style="left:1790.8px;top:384.0px"><svg width="22" height="22" viewBox="0 0 22 22"><path d="M8.8 16.4 H5.1 V5.1 H17 V10.3" fill="none" stroke="#555" stroke-width="1.3"/><path d="M7.5 7.8 H14.6 M7.5 10.6 H9.2 M7.5 13.3 H8.4" stroke="#555" stroke-width="1.2"/><circle cx="13.6" cy="15" r="2.6" fill="none" stroke="#555" stroke-width="1.3"/><path d="M15.5 16.9 L17.8 19.2" stroke="#555" stroke-width="1.4"/></svg></div><div class="btn" style="left:1814.8px;top:384.0px"><svg width="22" height="22" viewBox="0 0 22 22"><path d="M4.6 16.6 L10.4 11.3 L12.9 15.4 L17.2 10.9" fill="none" stroke="#d48a46" stroke-width="1.3"/><circle cx="4.6" cy="16.6" r="1.1" fill="#d48a46"/><circle cx="10.4" cy="11.3" r="1" fill="#d48a46"/><circle cx="12.9" cy="15.4" r="1" fill="#d48a46"/><circle cx="17.2" cy="10.9" r="1.1" fill="#d48a46"/><path d="M5.6 9 V11.2 M4.5 10.1 H6.7" stroke="#d48a46" stroke-width=".7"/><circle cx="13.1" cy="8.3" r="1.1" fill="#d48a46"/></svg></div><div class="btn" style="left:1838.8px;top:384.0px"><svg width="22" height="22" viewBox="0 0 22 22"><path d="M4.6 4.6 V18.7 H17.1" fill="none" stroke="#4aa5f2" stroke-width="1.3"/><circle cx="11.9" cy="7.1" r="1.9" fill="#4aa5f2"/><circle cx="9" cy="12.6" r="1.9" fill="#4aa5f2"/><circle cx="14.3" cy="14.2" r="1.9" fill="#4aa5f2"/></svg></div><div class="btn" style="left:1862.8px;top:384.0px"><svg width="22" height="22" viewBox="0 0 22 22"><path d="M12.6 6.4 H17 V10.8 M17 6.4 L12.7 10.7 M5 13.6 V18 H9.4 M5 18 L9.3 13.7" fill="none" stroke="#555" stroke-width="1.3"/></svg></div>
<div class="ylab" style="left:1089px;top:614.7px">0/s</div>
<div class="ylab" style="left:1089px;top:583.5px">5/s</div>
<div class="ylab" style="left:1089px;top:552.3px">10/s</div>
<div class="ylab" style="left:1089px;top:521.2px">15/s</div>
<div class="ylab" style="left:1089px;top:490.0px">20/s</div>
<div class="ylab" style="left:1089px;top:458.8px">25/s</div>
<div class="ylab" style="left:1089px;top:427.6px">30/s</div>
<div class="xlab" style="left:1176.0px;top:629.5px">03/31</div>
<div class="xlab" style="left:1300.2px;top:629.5px">11:40</div>
<div class="xlab" style="left:1424.4px;top:629.5px">11:50</div>
<div class="xlab" style="left:1548.6px;top:629.5px">12:00</div>
<div class="xlab" style="left:1672.8px;top:629.5px">12:10</div>
<div class="xlab" style="left:1797.0px;top:629.5px">12:20</div>
<svg class="abs" style="left:0;top:0;overflow:visible" width="1920" height="1080"><line x1="1159" y1="622.5" x2="1876" y2="622.5" stroke="#e2e1dd" stroke-width="1"/><line x1="1154" y1="622.5" x2="1158" y2="622.5" stroke="#d2d1cd" stroke-width="1"/><line x1="1159" y1="591.5" x2="1876" y2="591.5" stroke="#e2e1dd" stroke-width="1"/><line x1="1154" y1="591.5" x2="1158" y2="591.5" stroke="#d2d1cd" stroke-width="1"/><line x1="1159" y1="559.5" x2="1876" y2="559.5" stroke="#e2e1dd" stroke-width="1"/><line x1="1154" y1="559.5" x2="1158" y2="559.5" stroke="#d2d1cd" stroke-width="1"/><line x1="1159" y1="528.5" x2="1876" y2="528.5" stroke="#e2e1dd" stroke-width="1"/><line x1="1154" y1="528.5" x2="1158" y2="528.5" stroke="#d2d1cd" stroke-width="1"/><line x1="1159" y1="497.5" x2="1876" y2="497.5" stroke="#e2e1dd" stroke-width="1"/><line x1="1154" y1="497.5" x2="1158" y2="497.5" stroke="#d2d1cd" stroke-width="1"/><line x1="1159" y1="466.5" x2="1876" y2="466.5" stroke="#e2e1dd" stroke-width="1"/><line x1="1154" y1="466.5" x2="1158" y2="466.5" stroke="#d2d1cd" stroke-width="1"/><line x1="1159" y1="435.5" x2="1876" y2="435.5" stroke="#e2e1dd" stroke-width="1"/><line x1="1154" y1="435.5" x2="1158" y2="435.5" stroke="#d2d1cd" stroke-width="1"/><line x1="1206.5" y1="423" x2="1206.5" y2="622" stroke="#e5e4e0" stroke-width="1"/><line x1="1206.5" y1="622" x2="1206.5" y2="626" stroke="#d2d1cd" stroke-width="1"/><line x1="1330.5" y1="423" x2="1330.5" y2="622" stroke="#e5e4e0" stroke-width="1"/><line x1="1330.5" y1="622" x2="1330.5" y2="626" stroke="#d2d1cd" stroke-width="1"/><line x1="1454.5" y1="423" x2="1454.5" y2="622" stroke="#e5e4e0" stroke-width="1"/><line x1="1454.5" y1="622" x2="1454.5" y2="626" stroke="#d2d1cd" stroke-width="1"/><line x1="1578.5" y1="423" x2="1578.5" y2="622" stroke="#e5e4e0" stroke-width="1"/><line x1="1578.5" y1="622" x2="1578.5" y2="626" stroke="#d2d1cd" stroke-width="1"/><line x1="1702.5" y1="423" x2="1702.5" y2="622" stroke="#e5e4e0" stroke-width="1"/><line x1="1702.5" y1="622" x2="1702.5" y2="626" stroke="#d2d1cd" stroke-width="1"/><line x1="1827.5" y1="423" x2="1827.5" y2="622" stroke="#e5e4e0" stroke-width="1"/><line x1="1827.5" y1="622" x2="1827.5" y2="626" stroke="#d2d1cd" stroke-width="1"/><path d="M1159.0,445.0 L1160.5,445.5 L1162.0,445.0 L1163.5,444.5 L1165.0,445.0 L1166.5,445.5 L1168.0,445.0 L1169.5,444.5 L1171.0,445.0 L1172.5,445.5 L1174.0,445.0 L1175.5,444.5 L1177.0,445.0 L1178.5,445.5 L1180.0,445.0 L1181.5,444.5 L1183.0,445.0 L1184.5,445.5 L1186.0,445.0 L1186.6,444.7 L1189.7,498.2 L1192.6,444.4 L1194.1,444.6 L1195.6,445.4 L1197.1,445.4 L1198.6,444.6 L1200.1,444.6 L1201.6,445.4 L1203.1,445.4 L1204.6,444.6 L1206.1,444.6 L1207.6,445.4 L1209.1,445.4 L1210.6,444.6 L1212.1,444.6 L1213.6,445.4 L1215.1,445.4 L1216.6,444.6 L1218.1,444.6 L1219.6,445.4 L1221.4,444.7 L1226.4,480.6 L1229.3,444.4 L1230.8,445.0 L1232.3,445.5 L1233.8,445.0 L1235.3,444.5 L1236.8,445.0 L1238.3,445.5 L1239.8,445.0 L1241.3,444.5 L1242.8,445.0 L1244.3,445.5 L1245.8,445.0 L1247.3,444.5 L1248.8,445.0 L1250.3,445.5 L1251.8,445.0 L1253.3,444.5 L1254.8,445.0 L1256.3,445.5 L1257.8,445.0 L1259.5,444.7 L1264.5,484.6 L1267.4,444.4 L1268.9,445.4 L1270.4,444.6 L1271.9,444.6 L1273.4,445.4 L1274.9,445.4 L1276.4,444.6 L1277.9,444.6 L1279.4,445.4 L1280.9,445.4 L1282.4,444.6 L1283.9,444.6 L1285.4,445.4 L1286.9,445.4 L1288.4,444.6 L1289.9,444.6 L1291.4,445.4 L1292.9,445.4 L1294.4,444.6 L1295.9,444.6 L1297.4,445.4 L1298.9,445.4 L1299.5,444.7 L1304.5,494.0 L1307.4,444.4 L1308.9,445.2 L1310.4,445.5 L1311.9,444.8 L1313.4,444.5 L1314.9,445.2 L1316.4,445.5 L1317.9,444.8 L1319.4,444.5 L1320.9,445.2 L1322.4,445.5 L1323.9,444.8 L1325.4,444.5 L1326.9,445.2 L1328.4,445.5 L1329.9,444.8 L1331.4,444.5 L1332.2,444.7 L1335.3,503.0 L1338.2,444.4 L1339.7,445.5 L1341.2,445.2 L1342.7,444.5 L1344.2,444.8 L1345.7,445.5 L1347.2,445.2 L1348.7,444.5 L1350.2,444.8 L1351.7,445.5 L1353.2,445.2 L1354.7,444.5 L1356.2,444.8 L1357.7,445.5 L1359.2,445.2 L1360.7,444.5 L1362.2,444.9 L1363.7,445.5 L1365.2,445.1 L1366.2,444.7 L1369.3,503.0 L1372.2,444.4 L1373.7,444.6 L1375.2,445.4 L1376.7,445.4 L1378.2,444.6 L1379.7,444.6 L1381.2,445.4 L1382.7,445.4 L1384.2,444.6 L1385.7,444.6 L1387.2,445.4 L1388.7,445.4 L1390.2,444.6 L1391.7,444.6 L1393.2,445.4 L1394.7,445.4 L1396.2,444.6 L1397.7,444.6 L1399.2,445.4 L1400.3,444.7 L1403.4,502.0 L1406.3,444.4 L1407.8,444.7 L1409.3,444.5 L1410.8,445.3 L1412.3,445.5 L1413.8,444.7 L1415.3,444.5 L1416.8,445.3 L1418.3,445.5 L1419.8,444.7 L1421.3,444.5 L1422.8,445.3 L1424.3,445.5 L1425.8,444.7 L1427.3,444.5 L1428.8,445.3 L1430.3,445.5 L1431.8,444.7 L1433.3,444.5 L1434.8,445.3 L1436.3,445.5 L1437.3,444.7 L1440.4,496.0 L1443.3,444.4 L1444.8,444.5 L1446.3,445.0 L1447.8,445.5 L1449.3,445.0 L1450.8,444.5 L1452.3,445.0 L1453.8,445.5 L1455.3,444.9 L1456.8,444.5 L1458.3,445.1 L1459.8,445.5 L1461.3,444.9 L1462.8,444.5 L1464.3,445.1 L1465.8,445.5 L1467.3,444.9 L1468.8,444.5 L1470.3,445.1 L1471.8,445.5 L1473.3,444.7 L1478.3,487.0 L1481.2,444.4 L1482.7,445.3 L1484.2,445.5 L1485.7,444.7 L1487.2,444.5 L1488.7,445.3 L1490.2,445.4 L1491.7,444.7 L1493.2,444.6 L1494.7,445.3 L1496.2,445.4 L1497.7,444.7 L1499.2,444.6 L1500.7,445.3 L1502.2,445.4 L1503.7,444.7 L1505.2,444.6 L1506.4,444.7 L1509.5,502.0 L1512.4,444.4 L1513.9,445.5 L1515.4,444.8 L1516.9,444.5 L1518.4,445.2 L1519.9,445.5 L1521.4,444.8 L1522.9,444.5 L1524.4,445.2 L1525.9,445.5 L1527.4,444.8 L1528.9,444.5 L1530.4,445.2 L1531.9,445.5 L1533.4,444.8 L1534.9,444.5 L1536.4,445.2 L1537.9,445.5 L1538.5,444.7 L1543.5,491.0 L1546.4,444.4 L1547.9,445.0 L1549.4,445.5 L1550.9,445.0 L1552.4,444.5 L1553.9,445.0 L1555.4,445.5 L1556.9,445.0 L1558.4,444.5 L1559.9,445.0 L1561.4,445.5 L1562.9,445.0 L1564.4,444.5 L1565.9,445.0 L1567.4,445.5 L1568.9,445.0 L1570.4,444.5 L1571.9,445.0 L1572.6,444.7 L1577.6,482.6 L1580.5,444.4 L1582.0,444.5 L1583.5,444.8 L1585.0,445.5 L1586.5,445.2 L1588.0,444.5 L1589.5,444.8 L1591.0,445.5 L1592.5,445.2 L1594.0,444.5 L1595.5,444.8 L1597.0,445.5 L1598.5,445.2 L1600.0,444.5 L1601.5,444.8 L1603.0,445.5 L1603.7,444.7 L1608.7,482.6 L1611.6,444.4 L1613.1,444.6 L1614.6,445.4 L1616.1,445.4 L1617.6,444.6 L1619.1,444.6 L1620.6,445.4 L1622.1,445.4 L1623.6,444.6 L1625.1,444.7 L1626.6,445.4 L1628.1,445.3 L1629.6,444.6 L1631.1,444.7 L1632.6,445.4 L1634.1,445.3 L1634.8,444.7 L1639.8,476.6 L1642.7,444.4 L1644.2,445.3 L1645.7,445.5 L1647.2,444.7 L1648.7,444.5 L1650.2,445.3 L1651.7,445.5 L1653.2,444.7 L1654.7,444.5 L1656.2,445.3 L1657.7,445.5 L1659.2,444.7 L1660.7,444.5 L1662.2,445.3 L1663.7,445.5 L1665.2,444.7 L1666.7,444.5 L1668.2,445.3 L1670.2,444.7 L1673.3,503.0 L1676.2,444.4 L1677.7,444.5 L1679.2,444.8 L1680.7,445.5 L1682.2,445.2 L1683.7,444.5 L1685.2,444.8 L1686.7,445.5 L1688.2,445.2 L1689.7,444.5 L1691.2,444.8 L1692.7,445.5 L1694.2,445.2 L1695.7,444.5 L1697.2,444.8 L1698.7,445.5 L1699.4,444.7 L1704.4,482.0 L1707.3,444.4 L1708.8,444.6 L1710.3,445.4 L1711.8,445.4 L1713.3,444.6 L1714.8,444.6 L1716.3,445.4 L1717.8,445.4 L1719.3,444.6 L1720.8,444.6 L1722.3,445.4 L1723.8,445.4 L1725.3,444.6 L1726.8,444.6 L1728.3,445.4 L1729.8,445.4 L1731.3,444.6 L1732.8,444.6 L1734.3,445.4 L1735.3,444.7 L1738.4,503.0 L1741.3,444.4 L1742.8,444.8 L1744.3,444.5 L1745.8,445.2 L1747.3,445.5 L1748.8,444.8 L1750.3,444.5 L1751.8,445.2 L1753.3,445.5 L1754.8,444.8 L1756.3,444.5 L1757.8,445.2 L1759.3,445.5 L1760.8,444.8 L1762.3,444.5 L1763.8,445.2 L1765.3,445.5 L1766.8,444.8 L1768.1,444.7 L1773.1,494.0 L1776.0,444.4 L1777.5,445.4 L1779.0,444.6 L1780.5,444.6 L1782.0,445.4 L1783.5,445.4 L1785.0,444.6 L1786.5,444.6 L1788.0,445.4 L1789.5,445.4 L1791.0,444.6 L1792.5,444.6 L1794.0,445.4 L1795.5,445.4 L1797.0,444.6 L1798.5,444.6 L1799.5,444.7 L1804.5,477.0 L1807.4,444.4 L1808.9,444.7 L1810.4,444.6 L1811.9,445.3 L1813.4,445.4 L1814.9,444.7 L1816.4,444.6 L1817.9,445.4 L1819.4,445.4 L1820.9,444.6 L1822.4,444.6 L1823.9,445.4 L1825.4,445.4 L1826.9,444.6 L1828.4,444.6 L1829.9,445.4 L1831.4,445.4 L1832.9,444.6 L1834.4,444.6 L1835.5,444.7 L1838.6,503.0 L1841.5,444.4 L1843.0,445.5 L1844.5,444.8 L1846.0,444.5 L1847.5,445.2 L1849.0,445.5 L1850.5,444.8 L1852.0,444.5 L1853.5,445.2 L1855.0,445.5 L1856.5,444.8 L1858.0,444.5 L1859.5,445.2 L1861.0,445.5 L1862.5,444.8 L1864.0,444.5 L1865.5,445.2 L1867.0,445.5 L1868.5,444.8 L1869.2,444.7 L1872.3,500.0 L1875.2,444.4" fill="none" stroke="#62a8d3" stroke-width="1.2" stroke-linejoin="round"/><line x1="1773.5" y1="423" x2="1773.5" y2="622" stroke="#5a6a7a" stroke-width="1" stroke-dasharray="3,2"/><rect x="1158.2" y="422.2" width="1.8" height="1.8" fill="#7fb2e0"/></svg>
<div class="abs" style="left:1106.3px;top:665px;width:4px;height:12px;border-radius:2px;background:#6aafd6"></div>
<div class="leg" style="left:1116px;top:664.5px;width:143px">postgres-c97b8b49c-cxxr6</div>
<div class="panel" style="left:280px;top:694px;width:804px;height:313px"><div class="ph" style="height:37px"></div></div>
<div class="abs" style="left:294px;top:706px"><svg width="12" height="12" viewBox="0 0 12 12"><path d="M.6 .3V10.8H11.5" fill="none" stroke="#b0b0b0" stroke-width="1"/><path d="M1.5 9.3L4.3 4 6.8 5.8 10.8 1.2" fill="none" stroke="#b0b0b0" stroke-width=".9"/></svg></div>
<div class="ptitle" style="left:313px;top:706.5px"><i>Postgres</i> 연결수</div>
<div class="sel" style="left:422px;top:702px;width:170px">postgres-c97b8b49c-cxxr6</div>
<div class="tb" style="left:951.6px;top:699.5px"></div><div class="btn" style="left:955.0px;top:702.3px"><svg width="22" height="22" viewBox="0 0 22 22"><defs><linearGradient id="aig" x1="0" y1="0" x2="1" y2="1"><stop offset="0" stop-color="#f27c8c"/><stop offset="1" stop-color="#e8508a"/></linearGradient></defs><rect x="3.7" y="4.3" width="14.4" height="14.2" rx="3" fill="none" stroke="url(#aig)" stroke-width="1.2"/><path d="M6.6 16.1 L9.4 7.3 L12.2 16.1 M7.5 13.3 H11.3 M14.9 7.3 V16.1" fill="none" stroke="#ec6a80" stroke-width="1.15"/></svg></div><div class="btn" style="left:979.0px;top:702.3px"><svg width="22" height="22" viewBox="0 0 22 22"><path d="M8.8 16.4 H5.1 V5.1 H17 V10.3" fill="none" stroke="#555" stroke-width="1.3"/><path d="M7.5 7.8 H14.6 M7.5 10.6 H9.2 M7.5 13.3 H8.4" stroke="#555" stroke-width="1.2"/><circle cx="13.6" cy="15" r="2.6" fill="none" stroke="#555" stroke-width="1.3"/><path d="M15.5 16.9 L17.8 19.2" stroke="#555" stroke-width="1.4"/></svg></div><div class="btn" style="left:1003.0px;top:702.3px"><svg width="22" height="22" viewBox="0 0 22 22"><path d="M4.6 16.6 L10.4 11.3 L12.9 15.4 L17.2 10.9" fill="none" stroke="#d48a46" stroke-width="1.3"/><circle cx="4.6" cy="16.6" r="1.1" fill="#d48a46"/><circle cx="10.4" cy="11.3" r="1" fill="#d48a46"/><circle cx="12.9" cy="15.4" r="1" fill="#d48a46"/><circle cx="17.2" cy="10.9" r="1.1" fill="#d48a46"/><path d="M5.6 9 V11.2 M4.5 10.1 H6.7" stroke="#d48a46" stroke-width=".7"/><circle cx="13.1" cy="8.3" r="1.1" fill="#d48a46"/></svg></div><div class="btn" style="left:1027.0px;top:702.3px"><svg width="22" height="22" viewBox="0 0 22 22"><path d="M4.6 4.6 V18.7 H17.1" fill="none" stroke="#4aa5f2" stroke-width="1.3"/><circle cx="11.9" cy="7.1" r="1.9" fill="#4aa5f2"/><circle cx="9" cy="12.6" r="1.9" fill="#4aa5f2"/><circle cx="14.3" cy="14.2" r="1.9" fill="#4aa5f2"/></svg></div><div class="btn" style="left:1051.0px;top:702.3px"><svg width="22" height="22" viewBox="0 0 22 22"><path d="M12.6 6.4 H17 V10.8 M17 6.4 L12.7 10.7 M5 13.6 V18 H9.4 M5 18 L9.3 13.7" fill="none" stroke="#555" stroke-width="1.3"/></svg></div>
<div class="ylab" style="left:277.5px;top:935.0px">0#</div>
<div class="ylab" style="left:277.5px;top:898.6px">20#</div>
<div class="ylab" style="left:277.5px;top:862.3px">40#</div>
<div class="ylab" style="left:277.5px;top:825.9px">60#</div>
<div class="ylab" style="left:277.5px;top:789.6px">80#</div>
<div class="ylab" style="left:277.5px;top:753.2px">100#</div>
<div class="xlab" style="left:364.2px;top:949.5px">03/31</div>
<div class="xlab" style="left:488.4px;top:949.5px">11:40</div>
<div class="xlab" style="left:612.6px;top:949.5px">11:50</div>
<div class="xlab" style="left:736.8px;top:949.5px">12:00</div>
<div class="xlab" style="left:861.0px;top:949.5px">12:10</div>
<div class="xlab" style="left:985.2px;top:949.5px">12:20</div>
<svg class="abs" style="left:0;top:0;overflow:visible" width="1920" height="1080"><line x1="347" y1="942.5" x2="1064" y2="942.5" stroke="#e2e1dd" stroke-width="1"/><line x1="342" y1="942.5" x2="346" y2="942.5" stroke="#d2d1cd" stroke-width="1"/><line x1="347" y1="906.5" x2="1064" y2="906.5" stroke="#e2e1dd" stroke-width="1"/><line x1="342" y1="906.5" x2="346" y2="906.5" stroke="#d2d1cd" stroke-width="1"/><line x1="347" y1="869.5" x2="1064" y2="869.5" stroke="#e2e1dd" stroke-width="1"/><line x1="342" y1="869.5" x2="346" y2="869.5" stroke="#d2d1cd" stroke-width="1"/><line x1="347" y1="833.5" x2="1064" y2="833.5" stroke="#e2e1dd" stroke-width="1"/><line x1="342" y1="833.5" x2="346" y2="833.5" stroke="#d2d1cd" stroke-width="1"/><line x1="347" y1="797.5" x2="1064" y2="797.5" stroke="#e2e1dd" stroke-width="1"/><line x1="342" y1="797.5" x2="346" y2="797.5" stroke="#d2d1cd" stroke-width="1"/><line x1="347" y1="760.5" x2="1064" y2="760.5" stroke="#e2e1dd" stroke-width="1"/><line x1="342" y1="760.5" x2="346" y2="760.5" stroke="#d2d1cd" stroke-width="1"/><line x1="394.5" y1="743" x2="394.5" y2="942" stroke="#e5e4e0" stroke-width="1"/><line x1="394.5" y1="942" x2="394.5" y2="946" stroke="#d2d1cd" stroke-width="1"/><line x1="518.5" y1="743" x2="518.5" y2="942" stroke="#e5e4e0" stroke-width="1"/><line x1="518.5" y1="942" x2="518.5" y2="946" stroke="#d2d1cd" stroke-width="1"/><line x1="642.5" y1="743" x2="642.5" y2="942" stroke="#e5e4e0" stroke-width="1"/><line x1="642.5" y1="942" x2="642.5" y2="946" stroke="#d2d1cd" stroke-width="1"/><line x1="766.5" y1="743" x2="766.5" y2="942" stroke="#e5e4e0" stroke-width="1"/><line x1="766.5" y1="942" x2="766.5" y2="946" stroke="#d2d1cd" stroke-width="1"/><line x1="891.5" y1="743" x2="891.5" y2="942" stroke="#e5e4e0" stroke-width="1"/><line x1="891.5" y1="942" x2="891.5" y2="946" stroke="#d2d1cd" stroke-width="1"/><line x1="1015.5" y1="743" x2="1015.5" y2="942" stroke="#e5e4e0" stroke-width="1"/><line x1="1015.5" y1="942" x2="1015.5" y2="946" stroke="#d2d1cd" stroke-width="1"/><path d="M346.5,942.5 L346.5,927.7 L348.9,928.4 L351.3,928.2 L353.7,928.6 L356.1,926.1 L358.5,924.8 L360.9,927.9 L363.3,927.5 L365.7,927.2 L368.1,924.6 L370.5,927.7 L372.9,925.5 L375.3,927.7 L377.7,928.6 L380.1,928.2 L382.5,928.6 L384.9,929.2 L387.3,928.0 L389.7,927.7 L392.1,924.6 L394.5,927.0 L396.9,927.8 L399.3,927.7 L401.7,928.0 L404.1,927.7 L406.5,925.9 L408.9,926.5 L411.3,928.3 L413.7,928.2 L416.1,926.1 L418.5,927.6 L420.9,927.3 L423.3,927.6 L425.7,928.0 L428.1,928.1 L430.5,928.4 L432.9,928.9 L435.3,928.5 L437.7,928.6 L440.1,928.6 L442.5,928.6 L444.9,928.1 L447.3,927.5 L449.7,925.5 L452.1,927.4 L454.5,927.7 L456.9,927.5 L459.3,928.6 L461.7,928.7 L464.1,928.5 L466.5,928.5 L468.9,928.0 L471.3,928.0 L473.7,927.5 L476.1,925.6 L478.5,927.3 L480.9,927.7 L483.3,928.3 L485.7,928.1 L488.1,928.4 L490.5,928.8 L492.9,928.6 L495.3,928.1 L497.7,927.8 L500.1,927.8 L502.5,925.6 L504.9,927.2 L507.3,927.8 L509.7,928.4 L512.1,927.7 L514.5,926.8 L516.9,928.5 L519.3,925.6 L521.7,927.8 L524.1,928.1 L526.5,925.0 L528.9,927.5 L531.3,926.9 L533.7,927.6 L536.1,927.2 L538.5,928.4 L540.9,928.0 L543.3,928.8 L545.7,928.4 L548.1,925.4 L550.5,928.0 L552.9,928.2 L555.3,927.3 L557.7,927.2 L560.1,924.3 L562.5,927.9 L564.9,927.9 L567.3,928.1 L569.7,928.2 L572.1,928.6 L574.5,928.6 L576.9,928.4 L579.3,928.2 L581.7,927.2 L584.1,927.7 L586.5,927.5 L588.9,927.7 L591.3,927.9 L593.7,927.9 L596.1,928.6 L598.5,928.8 L600.9,928.4 L603.3,927.9 L605.7,928.0 L608.1,927.9 L610.5,927.4 L612.9,927.2 L615.3,926.1 L617.7,927.6 L620.1,928.3 L622.5,928.3 L624.9,928.5 L627.3,928.6 L629.7,929.0 L632.1,928.4 L634.5,928.3 L636.9,927.8 L639.3,927.2 L641.7,927.0 L644.1,927.6 L646.5,925.6 L648.9,928.1 L651.3,928.2 L653.7,928.5 L656.1,928.3 L658.5,928.1 L660.9,925.0 L663.3,927.8 L665.7,927.4 L668.1,927.6 L670.5,927.3 L672.9,927.8 L675.3,927.4 L677.7,928.4 L680.1,928.9 L682.5,928.6 L684.9,928.3 L687.3,928.6 L689.7,927.9 L692.1,928.0 L694.5,924.8 L696.9,927.0 L699.3,924.3 L701.7,928.2 L704.1,928.3 L706.4,928.5 L708.8,928.5 L711.2,928.5 L713.6,927.9 L716.0,925.5 L718.4,927.8 L720.8,927.4 L723.2,927.8 L725.6,927.7 L728.0,927.4 L730.4,928.3 L732.8,927.9 L735.2,928.8 L737.6,928.5 L740.0,928.2 L742.4,924.7 L744.8,927.6 L747.2,927.6 L749.6,924.5 L752.0,927.4 L754.4,928.1 L756.8,927.7 L759.2,928.4 L761.6,928.7 L764.0,928.4 L766.4,928.6 L768.8,928.5 L771.2,926.1 L773.6,927.8 L776.0,927.9 L778.4,927.3 L780.8,927.4 L783.2,927.6 L785.6,928.1 L788.0,928.1 L790.4,928.7 L792.8,928.7 L795.2,928.6 L797.6,927.7 L800.0,927.7 L802.4,927.6 L804.8,927.8 L807.2,927.4 L809.6,927.8 L812.0,928.5 L814.4,928.2 L816.8,925.3 L819.2,928.4 L821.6,928.6 L824.0,928.2 L826.4,928.1 L828.8,927.7 L831.2,927.6 L833.6,927.4 L836.0,927.2 L838.4,926.1 L840.8,928.4 L843.2,928.5 L845.6,928.7 L848.0,928.7 L850.4,927.4 L852.8,928.1 L855.2,927.4 L857.6,927.6 L860.0,927.1 L862.4,924.5 L864.8,927.8 L867.2,927.9 L869.6,928.2 L872.0,928.6 L874.4,929.1 L876.8,928.5 L879.2,928.5 L881.6,927.7 L884.0,926.9 L886.4,927.4 L888.8,927.8 L891.2,927.3 L893.6,927.4 L896.0,928.5 L898.4,928.5 L900.8,928.2 L903.2,928.8 L905.6,926.3 L908.0,927.8 L910.4,927.5 L912.8,927.4 L915.2,927.2 L917.6,927.2 L920.0,927.7 L922.4,927.9 L924.8,925.2 L927.2,928.5 L929.6,926.5 L932.0,928.4 L934.4,928.3 L936.8,927.6 L939.2,927.5 L941.6,927.8 L944.0,924.7 L946.4,927.6 L948.8,927.8 L951.2,928.1 L953.6,928.5 L956.0,929.2 L958.4,928.8 L960.8,928.1 L963.2,927.9 L965.6,927.5 L968.0,927.4 L970.4,925.8 L972.8,927.5 L975.2,927.3 L977.6,924.9 L980.0,928.5 L982.4,928.5 L984.8,927.9 L987.2,928.5 L989.6,928.5 L992.0,927.7 L994.4,924.9 L996.8,927.1 L999.2,927.5 L1001.6,927.7 L1004.0,927.6 L1006.4,928.4 L1008.8,928.3 L1011.2,928.5 L1013.6,929.1 L1016.0,928.3 L1018.4,928.4 L1020.8,928.0 L1023.2,927.3 L1025.6,927.6 L1028.0,927.2 L1030.4,927.6 L1032.8,928.1 L1035.2,929.1 L1037.6,928.7 L1040.0,928.6 L1042.4,928.3 L1044.8,926.3 L1047.2,927.6 L1049.6,927.2 L1052.0,927.2 L1054.4,927.5 L1056.8,924.6 L1059.2,927.9 L1061.6,928.3 L1064.0,928.4 L1064,942.5 Z" fill="#d6dcd9" stroke="#bcdad0" stroke-width=".7"/><rect x="346.5" y="937.5" width="717.5" height="5" fill="#90c9e8"/><line x1="346.5" y1="937.3" x2="1064" y2="937.3" stroke="#cfe0a0" stroke-width=".6"/><line x1="347" y1="760.5" x2="1064" y2="760.5" stroke="#dd5c5c" stroke-width="1.2" stroke-dasharray="4.5,3"/><path d="M989.5 937.5 L992.5 930 L995.5 937.5Z" fill="#c9dc3c"/><path d="M408 928 L410.5 931 L413 927Z" fill="#3aa88a"/><line x1="961.5" y1="743" x2="961.5" y2="942" stroke="#5a6a7a" stroke-width="1" stroke-dasharray="3,2"/><rect x="346.2" y="742.2" width="1.8" height="1.8" fill="#7fb2e0"/></svg>
<div class="abs" style="left:294.8px;top:987px;width:4px;height:12px;border-radius:2px;background:#3aa88a"></div>
<div class="leg" style="left:304.7px;top:986.5px;width:48px">active</div>
<div class="abs" style="left:342.3px;top:987px;width:4px;height:12px;border-radius:2px;background:#dddcd8"></div>
<div class="leg" style="left:351px;top:986.5px;width:37px">idle</div>
<div class="abs" style="left:378.3px;top:987px;width:4px;height:12px;border-radius:2px;background:#c8d840"></div>
<div class="leg" style="left:387px;top:986.5px;width:105px">idle in transaction</div>
<div class="abs" style="left:483.3px;top:987px;width:4px;height:12px;border-radius:2px;background:#90c9ee"></div>
<div class="leg" style="left:492px;top:986.5px;width:58px">reserved</div>
<div class="abs" style="left:541.3px;top:987px;width:4px;height:12px;border-radius:2px;background:#e06060"></div>
<div class="leg" style="left:550px;top:986.5px;width:101px">max_connections</div>
<div class="abs" style="left:645px;top:985px;width:1px;height:18px;background:#d5d4d0"></div>
<svg class="abs" style="left:654px;top:988px" width="40" height="10" viewBox="0 0 40 10"><path d="M1 5Q6 0 11 5Q6 10 1 5Z" fill="none" stroke="#999" stroke-width="1"/><circle cx="6" cy="5" r="1.5" fill="#999"/><path d="M20 5Q25 0 30 5Q25 10 20 5Z M21 1l8 8" fill="none" stroke="#999" stroke-width="1"/></svg>
<div class="panel" style="left:1092px;top:694px;width:804px;height:313px"><div class="ph" style="height:37px"></div></div>
<div class="abs" style="left:1106px;top:706px"><svg width="12" height="12" viewBox="0 0 12 12"><path d="M.6 .3V10.8H11.5" fill="none" stroke="#b0b0b0" stroke-width="1"/><path d="M1.5 9.3L4.3 4 6.8 5.8 10.8 1.2" fill="none" stroke="#b0b0b0" stroke-width=".9"/></svg></div>
<div class="ptitle" style="left:1125px;top:706.5px"><i>Idle transactions on</i></div>
<div class="sel" style="left:1265px;top:702px;width:170px">postgres-c97b8b49c-cxxr6</div>
<div class="tb" style="left:1763.4px;top:699.5px"></div><div class="btn" style="left:1766.8px;top:702.3px"><svg width="22" height="22" viewBox="0 0 22 22"><defs><linearGradient id="aig" x1="0" y1="0" x2="1" y2="1"><stop offset="0" stop-color="#f27c8c"/><stop offset="1" stop-color="#e8508a"/></linearGradient></defs><rect x="3.7" y="4.3" width="14.4" height="14.2" rx="3" fill="none" stroke="url(#aig)" stroke-width="1.2"/><path d="M6.6 16.1 L9.4 7.3 L12.2 16.1 M7.5 13.3 H11.3 M14.9 7.3 V16.1" fill="none" stroke="#ec6a80" stroke-width="1.15"/></svg></div><div class="btn" style="left:1790.8px;top:702.3px"><svg width="22" height="22" viewBox="0 0 22 22"><path d="M8.8 16.4 H5.1 V5.1 H17 V10.3" fill="none" stroke="#555" stroke-width="1.3"/><path d="M7.5 7.8 H14.6 M7.5 10.6 H9.2 M7.5 13.3 H8.4" stroke="#555" stroke-width="1.2"/><circle cx="13.6" cy="15" r="2.6" fill="none" stroke="#555" stroke-width="1.3"/><path d="M15.5 16.9 L17.8 19.2" stroke="#555" stroke-width="1.4"/></svg></div><div class="btn" style="left:1814.8px;top:702.3px"><svg width="22" height="22" viewBox="0 0 22 22"><path d="M4.6 16.6 L10.4 11.3 L12.9 15.4 L17.2 10.9" fill="none" stroke="#d48a46" stroke-width="1.3"/><circle cx="4.6" cy="16.6" r="1.1" fill="#d48a46"/><circle cx="10.4" cy="11.3" r="1" fill="#d48a46"/><circle cx="12.9" cy="15.4" r="1" fill="#d48a46"/><circle cx="17.2" cy="10.9" r="1.1" fill="#d48a46"/><path d="M5.6 9 V11.2 M4.5 10.1 H6.7" stroke="#d48a46" stroke-width=".7"/><circle cx="13.1" cy="8.3" r="1.1" fill="#d48a46"/></svg></div><div class="btn" style="left:1838.8px;top:702.3px"><svg width="22" height="22" viewBox="0 0 22 22"><path d="M4.6 4.6 V18.7 H17.1" fill="none" stroke="#4aa5f2" stroke-width="1.3"/><circle cx="11.9" cy="7.1" r="1.9" fill="#4aa5f2"/><circle cx="9" cy="12.6" r="1.9" fill="#4aa5f2"/><circle cx="14.3" cy="14.2" r="1.9" fill="#4aa5f2"/></svg></div><div class="btn" style="left:1862.8px;top:702.3px"><svg width="22" height="22" viewBox="0 0 22 22"><path d="M12.6 6.4 H17 V10.8 M17 6.4 L12.7 10.7 M5 13.6 V18 H9.4 M5 18 L9.3 13.7" fill="none" stroke="#555" stroke-width="1.3"/></svg></div>
<div class="ylab" style="left:1089px;top:935.0px">0#</div>
<div class="ylab" style="left:1089px;top:904.7px">0.5#</div>
<div class="ylab" style="left:1089px;top:874.4px">1#</div>
<div class="ylab" style="left:1089px;top:844.1px">1.5#</div>
<div class="ylab" style="left:1089px;top:813.8px">2#</div>
<div class="ylab" style="left:1089px;top:783.5px">2.5#</div>
<div class="ylab" style="left:1089px;top:753.2px">3#</div>
<div class="xlab" style="left:1176.0px;top:949.5px">03/31</div>
<div class="xlab" style="left:1300.2px;top:949.5px">11:40</div>
<div class="xlab" style="left:1424.4px;top:949.5px">11:50</div>
<div class="xlab" style="left:1548.6px;top:949.5px">12:00</div>
<div class="xlab" style="left:1672.8px;top:949.5px">12:10</div>
<div class="xlab" style="left:1797.0px;top:949.5px">12:20</div>
<svg class="abs" style="left:0;top:0;overflow:visible" width="1920" height="1080"><line x1="1159" y1="942.5" x2="1876" y2="942.5" stroke="#e2e1dd" stroke-width="1"/><line x1="1154" y1="942.5" x2="1158" y2="942.5" stroke="#d2d1cd" stroke-width="1"/><line x1="1159" y1="912.5" x2="1876" y2="912.5" stroke="#e2e1dd" stroke-width="1"/><line x1="1154" y1="912.5" x2="1158" y2="912.5" stroke="#d2d1cd" stroke-width="1"/><line x1="1159" y1="881.5" x2="1876" y2="881.5" stroke="#e2e1dd" stroke-width="1"/><line x1="1154" y1="881.5" x2="1158" y2="881.5" stroke="#d2d1cd" stroke-width="1"/><line x1="1159" y1="851.5" x2="1876" y2="851.5" stroke="#e2e1dd" stroke-width="1"/><line x1="1154" y1="851.5" x2="1158" y2="851.5" stroke="#d2d1cd" stroke-width="1"/><line x1="1159" y1="821.5" x2="1876" y2="821.5" stroke="#e2e1dd" stroke-width="1"/><line x1="1154" y1="821.5" x2="1158" y2="821.5" stroke="#d2d1cd" stroke-width="1"/><line x1="1159" y1="791.5" x2="1876" y2="791.5" stroke="#e2e1dd" stroke-width="1"/><line x1="1154" y1="791.5" x2="1158" y2="791.5" stroke="#d2d1cd" stroke-width="1"/><line x1="1159" y1="760.5" x2="1876" y2="760.5" stroke="#e2e1dd" stroke-width="1"/><line x1="1154" y1="760.5" x2="1158" y2="760.5" stroke="#d2d1cd" stroke-width="1"/><line x1="1206.5" y1="743" x2="1206.5" y2="942" stroke="#e5e4e0" stroke-width="1"/><line x1="1206.5" y1="942" x2="1206.5" y2="946" stroke="#d2d1cd" stroke-width="1"/><line x1="1330.5" y1="743" x2="1330.5" y2="942" stroke="#e5e4e0" stroke-width="1"/><line x1="1330.5" y1="942" x2="1330.5" y2="946" stroke="#d2d1cd" stroke-width="1"/><line x1="1454.5" y1="743" x2="1454.5" y2="942" stroke="#e5e4e0" stroke-width="1"/><line x1="1454.5" y1="942" x2="1454.5" y2="946" stroke="#d2d1cd" stroke-width="1"/><line x1="1578.5" y1="743" x2="1578.5" y2="942" stroke="#e5e4e0" stroke-width="1"/><line x1="1578.5" y1="942" x2="1578.5" y2="946" stroke="#d2d1cd" stroke-width="1"/><line x1="1702.5" y1="743" x2="1702.5" y2="942" stroke="#e5e4e0" stroke-width="1"/><line x1="1702.5" y1="942" x2="1702.5" y2="946" stroke="#d2d1cd" stroke-width="1"/><line x1="1827.5" y1="743" x2="1827.5" y2="942" stroke="#e5e4e0" stroke-width="1"/><line x1="1827.5" y1="942" x2="1827.5" y2="946" stroke="#d2d1cd" stroke-width="1"/><path d="M1257.5 942.5 L1260.6 881.5 L1264 942.5Z" fill="#5aa5d0"/><path d="M1801.5 942.5 L1804.5 761 L1807.5 942.5Z" fill="#d9a55c"/><line x1="1773.5" y1="743" x2="1773.5" y2="942" stroke="#5a6a7a" stroke-width="1" stroke-dasharray="3,2"/><rect x="1158.2" y="742.2" width="1.8" height="1.8" fill="#7fb2e0"/></svg>
<div class="abs" style="left:1106.8px;top:987px;width:4px;height:12px;border-radius:2px;background:#6aafd6"></div>
<div class="leg" style="left:1116px;top:986.5px;width:102px">root@shop: begin</div>
<div class="abs" style="left:1209.3px;top:987px;width:4px;height:12px;border-radius:2px;background:#e8a552"></div>
<div class="leg" style="left:1218px;top:986.5px;width:366px">root@shop: select id, name, price, description from products where id = ?</div>
<div class="abs" style="left:1579px;top:985px;width:1px;height:18px;background:#d5d4d0"></div>
<svg class="abs" style="left:1589px;top:988px" width="40" height="10" viewBox="0 0 40 10"><path d="M1 5Q6 0 11 5Q6 10 1 5Z" fill="none" stroke="#999" stroke-width="1"/><circle cx="6" cy="5" r="1.5" fill="#999"/><path d="M20 5Q25 0 30 5Q25 10 20 5Z M21 1l8 8" fill="none" stroke="#999" stroke-width="1"/></svg>
<div class="panel" style="left:280px;top:1013px;width:804px;height:100px"><div class="ph" style="height:37px"></div></div>
<div class="abs" style="left:294px;top:1025px"><svg width="12" height="12" viewBox="0 0 12 12"><path d="M.6 .3V10.8H11.5" fill="none" stroke="#b0b0b0" stroke-width="1"/><path d="M1.5 9.3L4.3 4 6.8 5.8 10.8 1.2" fill="none" stroke="#b0b0b0" stroke-width=".9"/></svg></div>
<div class="ptitle" style="left:313px;top:1024px">총 소요시간별 쿼리 :</div>
<div class="sel" style="left:433px;top:1021px;width:170px">postgres-c97b8b49c-cxxr6</div>
<div class="abs" style="left:613px;top:1024px;font-size:12px;color:#555;letter-spacing:.4px">(쿼리 초/초)</div>
<div class="tb" style="left:951.6px;top:1018.4px"></div><div class="btn" style="left:955.0px;top:1021.2px"><svg width="22" height="22" viewBox="0 0 22 22"><defs><linearGradient id="aig" x1="0" y1="0" x2="1" y2="1"><stop offset="0" stop-color="#f27c8c"/><stop offset="1" stop-color="#e8508a"/></linearGradient></defs><rect x="3.7" y="4.3" width="14.4" height="14.2" rx="3" fill="none" stroke="url(#aig)" stroke-width="1.2"/><path d="M6.6 16.1 L9.4 7.3 L12.2 16.1 M7.5 13.3 H11.3 M14.9 7.3 V16.1" fill="none" stroke="#ec6a80" stroke-width="1.15"/></svg></div><div class="btn" style="left:979.0px;top:1021.2px"><svg width="22" height="22" viewBox="0 0 22 22"><path d="M8.8 16.4 H5.1 V5.1 H17 V10.3" fill="none" stroke="#555" stroke-width="1.3"/><path d="M7.5 7.8 H14.6 M7.5 10.6 H9.2 M7.5 13.3 H8.4" stroke="#555" stroke-width="1.2"/><circle cx="13.6" cy="15" r="2.6" fill="none" stroke="#555" stroke-width="1.3"/><path d="M15.5 16.9 L17.8 19.2" stroke="#555" stroke-width="1.4"/></svg></div><div class="btn" style="left:1003.0px;top:1021.2px"><svg width="22" height="22" viewBox="0 0 22 22"><path d="M4.6 16.6 L10.4 11.3 L12.9 15.4 L17.2 10.9" fill="none" stroke="#d48a46" stroke-width="1.3"/><circle cx="4.6" cy="16.6" r="1.1" fill="#d48a46"/><circle cx="10.4" cy="11.3" r="1" fill="#d48a46"/><circle cx="12.9" cy="15.4" r="1" fill="#d48a46"/><circle cx="17.2" cy="10.9" r="1.1" fill="#d48a46"/><path d="M5.6 9 V11.2 M4.5 10.1 H6.7" stroke="#d48a46" stroke-width=".7"/><circle cx="13.1" cy="8.3" r="1.1" fill="#d48a46"/></svg></div><div class="btn" style="left:1027.0px;top:1021.2px"><svg width="22" height="22" viewBox="0 0 22 22"><path d="M4.6 4.6 V18.7 H17.1" fill="none" stroke="#4aa5f2" stroke-width="1.3"/><circle cx="11.9" cy="7.1" r="1.9" fill="#4aa5f2"/><circle cx="9" cy="12.6" r="1.9" fill="#4aa5f2"/><circle cx="14.3" cy="14.2" r="1.9" fill="#4aa5f2"/></svg></div><div class="btn" style="left:1051.0px;top:1021.2px"><svg width="22" height="22" viewBox="0 0 22 22"><path d="M12.6 6.4 H17 V10.8 M17 6.4 L12.7 10.7 M5 13.6 V18 H9.4 M5 18 L9.3 13.7" fill="none" stroke="#555" stroke-width="1.3"/></svg></div>
<div class="ylab" style="left:277px;top:1054px">0.0012/s</div>
<svg class="abs" style="left:0;top:0" width="1920" height="1080"><line x1="347" y1="1061.5" x2="1064" y2="1061.5" stroke="#e1e0dc"/><line x1="342" y1="1061.5" x2="346" y2="1061.5" stroke="#d2d1cd"/><line x1="394.5" y1="1050" x2="394.5" y2="1080" stroke="#e4e3df"/><line x1="518.5" y1="1050" x2="518.5" y2="1080" stroke="#e4e3df"/><line x1="642.5" y1="1050" x2="642.5" y2="1080" stroke="#e4e3df"/><line x1="766.5" y1="1050" x2="766.5" y2="1080" stroke="#e4e3df"/><line x1="891.5" y1="1050" x2="891.5" y2="1080" stroke="#e4e3df"/><line x1="1015.5" y1="1050" x2="1015.5" y2="1080" stroke="#e4e3df"/><line x1="961.5" y1="1050" x2="961.5" y2="1080" stroke="#5a6a7a" stroke-dasharray="3,2"/><rect x="346.2" y="1061" width="1.8" height="1.8" fill="#7fb2e0"/></svg>
<div class="panel" style="left:1092px;top:1013px;width:804px;height:100px"><div class="ph" style="height:37px"></div></div>
<div class="abs" style="left:1106px;top:1025px"><svg width="12" height="12" viewBox="0 0 12 12"><path d="M.6 .3V10.8H11.5" fill="none" stroke="#b0b0b0" stroke-width="1"/><path d="M1.5 9.3L4.3 4 6.8 5.8 10.8 1.2" fill="none" stroke="#b0b0b0" stroke-width=".9"/></svg></div>
<div class="ptitle" style="left:1125px;top:1024.5px"><i>I/O</i> 시간별 쿼리 :</div>
<div class="sel" style="left:1230px;top:1021px;width:170px">postgres-c97b8b49c-cxxr6</div>
<div class="abs" style="left:1411px;top:1024px;font-size:12px;color:#555;letter-spacing:.4px">(쿼리 초/초)</div>
<div class="tb" style="left:1763.4px;top:1018.4px"></div><div class="btn" style="left:1766.8px;top:1021.2px"><svg width="22" height="22" viewBox="0 0 22 22"><defs><linearGradient id="aig" x1="0" y1="0" x2="1" y2="1"><stop offset="0" stop-color="#f27c8c"/><stop offset="1" stop-color="#e8508a"/></linearGradient></defs><rect x="3.7" y="4.3" width="14.4" height="14.2" rx="3" fill="none" stroke="url(#aig)" stroke-width="1.2"/><path d="M6.6 16.1 L9.4 7.3 L12.2 16.1 M7.5 13.3 H11.3 M14.9 7.3 V16.1" fill="none" stroke="#ec6a80" stroke-width="1.15"/></svg></div><div class="btn" style="left:1790.8px;top:1021.2px"><svg width="22" height="22" viewBox="0 0 22 22"><path d="M8.8 16.4 H5.1 V5.1 H17 V10.3" fill="none" stroke="#555" stroke-width="1.3"/><path d="M7.5 7.8 H14.6 M7.5 10.6 H9.2 M7.5 13.3 H8.4" stroke="#555" stroke-width="1.2"/><circle cx="13.6" cy="15" r="2.6" fill="none" stroke="#555" stroke-width="1.3"/><path d="M15.5 16.9 L17.8 19.2" stroke="#555" stroke-width="1.4"/></svg></div><div class="btn" style="left:1814.8px;top:1021.2px"><svg width="22" height="22" viewBox="0 0 22 22"><path d="M4.6 16.6 L10.4 11.3 L12.9 15.4 L17.2 10.9" fill="none" stroke="#d48a46" stroke-width="1.3"/><circle cx="4.6" cy="16.6" r="1.1" fill="#d48a46"/><circle cx="10.4" cy="11.3" r="1" fill="#d48a46"/><circle cx="12.9" cy="15.4" r="1" fill="#d48a46"/><circle cx="17.2" cy="10.9" r="1.1" fill="#d48a46"/><path d="M5.6 9 V11.2 M4.5 10.1 H6.7" stroke="#d48a46" stroke-width=".7"/><circle cx="13.1" cy="8.3" r="1.1" fill="#d48a46"/></svg></div><div class="btn" style="left:1838.8px;top:1021.2px"><svg width="22" height="22" viewBox="0 0 22 22"><path d="M4.6 4.6 V18.7 H17.1" fill="none" stroke="#4aa5f2" stroke-width="1.3"/><circle cx="11.9" cy="7.1" r="1.9" fill="#4aa5f2"/><circle cx="9" cy="12.6" r="1.9" fill="#4aa5f2"/><circle cx="14.3" cy="14.2" r="1.9" fill="#4aa5f2"/></svg></div><div class="btn" style="left:1862.8px;top:1021.2px"><svg width="22" height="22" viewBox="0 0 22 22"><path d="M12.6 6.4 H17 V10.8 M17 6.4 L12.7 10.7 M5 13.6 V18 H9.4 M5 18 L9.3 13.7" fill="none" stroke="#555" stroke-width="1.3"/></svg></div>
<div class="ylab" style="left:1089px;top:1054px">100/s</div>
<div class="ylab" style="left:1089px;top:1072px">90/s</div>
<svg class="abs" style="left:0;top:0" width="1920" height="1080"><line x1="1159" y1="1061.5" x2="1876" y2="1061.5" stroke="#e1e0dc"/><line x1="1154" y1="1061.5" x2="1158" y2="1061.5" stroke="#d2d1cd"/><line x1="1206.5" y1="1050" x2="1206.5" y2="1080" stroke="#e4e3df"/><line x1="1330.5" y1="1050" x2="1330.5" y2="1080" stroke="#e4e3df"/><line x1="1454.5" y1="1050" x2="1454.5" y2="1080" stroke="#e4e3df"/><line x1="1578.5" y1="1050" x2="1578.5" y2="1080" stroke="#e4e3df"/><line x1="1702.5" y1="1050" x2="1702.5" y2="1080" stroke="#e4e3df"/><line x1="1827.5" y1="1050" x2="1827.5" y2="1080" stroke="#e4e3df"/><line x1="1773.5" y1="1050" x2="1773.5" y2="1080" stroke="#5a6a7a" stroke-dasharray="3,2"/><rect x="1158.2" y="1061" width="1.8" height="1.8" fill="#7fb2e0"/></svg>
<div class="abs" style="left:986px;top:500px;width:247px;height:61px;background:#fff;border-radius:6px;box-shadow:0 2px 10px rgba(0,0,0,.13)"></div>
<svg class="abs" style="left:0;top:0" width="1100" height="540" viewBox="0 0 1100 540"><path d="M1037.5 511.2 V522.6 M1032.3 513.5 H1037.5 M1033.5 516.5 H1037.5 M1035 519.4 H1037.5 M1039.3 513.5 H1040.6 M1039.3 516.5 H1041.9 M1039.3 519.4 H1043.6" stroke="#555" stroke-width="1.1" stroke-linecap="round"/></svg>
<div class="abs mono" style="left:1052px;top:510.5px;font-size:12px;color:#3a3a3a;white-space:nowrap;letter-spacing:.2px">2026-03-31 12:15:38</div>
<div class="abs" style="left:996px;top:530px;width:226px;height:1px;background:#eee"></div>
<div class="abs" style="left:996px;top:539px;width:3px;height:12px;background:#5aa5d0"></div>
<div class="abs" style="left:1006px;top:539px;font-size:12px;color:#444;white-space:nowrap;letter-spacing:.45px">postgres-c97b8b49c-cxxr6:</div>
<div class="abs mono" style="left:1167px;top:539px;font-size:12px;color:#3a3a3a;">28.70μ/s</div>
<svg class="abs" style="left:1815px;top:895px" width="70" height="80" viewBox="0 0 70 80">
<defs>
<radialGradient id="rw" cx=".35" cy=".3" r=".8"><stop offset="0" stop-color="#fffdfa"/><stop offset=".7" stop-color="#f1e9e1"/><stop offset="1" stop-color="#d9ccc2"/></radialGradient>
<radialGradient id="rr" cx=".35" cy=".3" r=".8"><stop offset="0" stop-color="#ff6a45"/><stop offset="1" stop-color="#d8301a"/></radialGradient>
</defs>
<path d="M17.5 41 Q22 45.5 29 46.5" stroke="#e9ded4" stroke-width="4.6" fill="none" stroke-linecap="round"/>
<path d="M51.5 41.5 Q55 46 56 52" stroke="#e9ded4" stroke-width="4.6" fill="none" stroke-linecap="round"/>
<path d="M12 32 Q10.5 28.5 14 29 Q15.5 26.5 17.5 30 Q19.5 28 20 32 Q21 38 18 41.5 Q14 43 12.5 39 Z" fill="url(#rr)"/>
<path d="M54 54 Q56 50.5 59.5 52.5 Q62 55 60.5 59 Q58.5 62.5 55.5 61 Q53 58 54 54 Z" fill="url(#rr)"/>
<path d="M26 56.5 Q38.5 61.5 51.5 55.5 Q47 66 39 72.6 Q30 66 26 56.5 Z" fill="url(#rr)"/>
<path d="M26.5 45 Q27 40 31.5 40 L48 40 Q52.5 40 52 45.5 L51.5 56 Q38.5 61.5 26.5 56.5 Z" fill="url(#rw)"/>
<path d="M31 40 L49 40 Q47 45 40 45.5 Q33 45 31 40 Z" fill="url(#rr)"/>
<path d="M30.5 55.5 L34.2 48 L37.6 55.5 M38 50.5 L40.6 55.5" stroke="#e3321a" stroke-width="2.1" fill="none" stroke-linecap="round"/>
<circle cx="39.6" cy="47.6" r="1.1" fill="#e3321a"/>
<path d="M41.5 5.2 C52.5 5.2 58.2 16.5 58.2 26.5 C58.2 35.5 50 40.5 40.5 40.5 C30.5 40.5 23 35.5 23 26.5 C23 16.5 30.5 5.2 41.5 5.2 Z" fill="url(#rw)"/>
<path d="M34.2 15.2 L37.8 11 L41.5 15.2 Z" fill="#e8341c"/>
<rect x="25" y="18" width="26" height="18.7" rx="9.3" fill="#1d1612"/>
<ellipse cx="30.6" cy="27.7" rx="2.8" ry="4.4" fill="#22e4e4"/>
<ellipse cx="44.4" cy="27.7" rx="2.9" ry="4.4" fill="#22e4e4"/>
<ellipse cx="30" cy="26" rx="1" ry="1.6" fill="#b8ffff"/>
<ellipse cx="43.8" cy="26" rx="1" ry="1.6" fill="#b8ffff"/>
<ellipse cx="56.8" cy="26.5" rx="1.7" ry="5.6" fill="#e8341c"/>
</svg></body></html>
